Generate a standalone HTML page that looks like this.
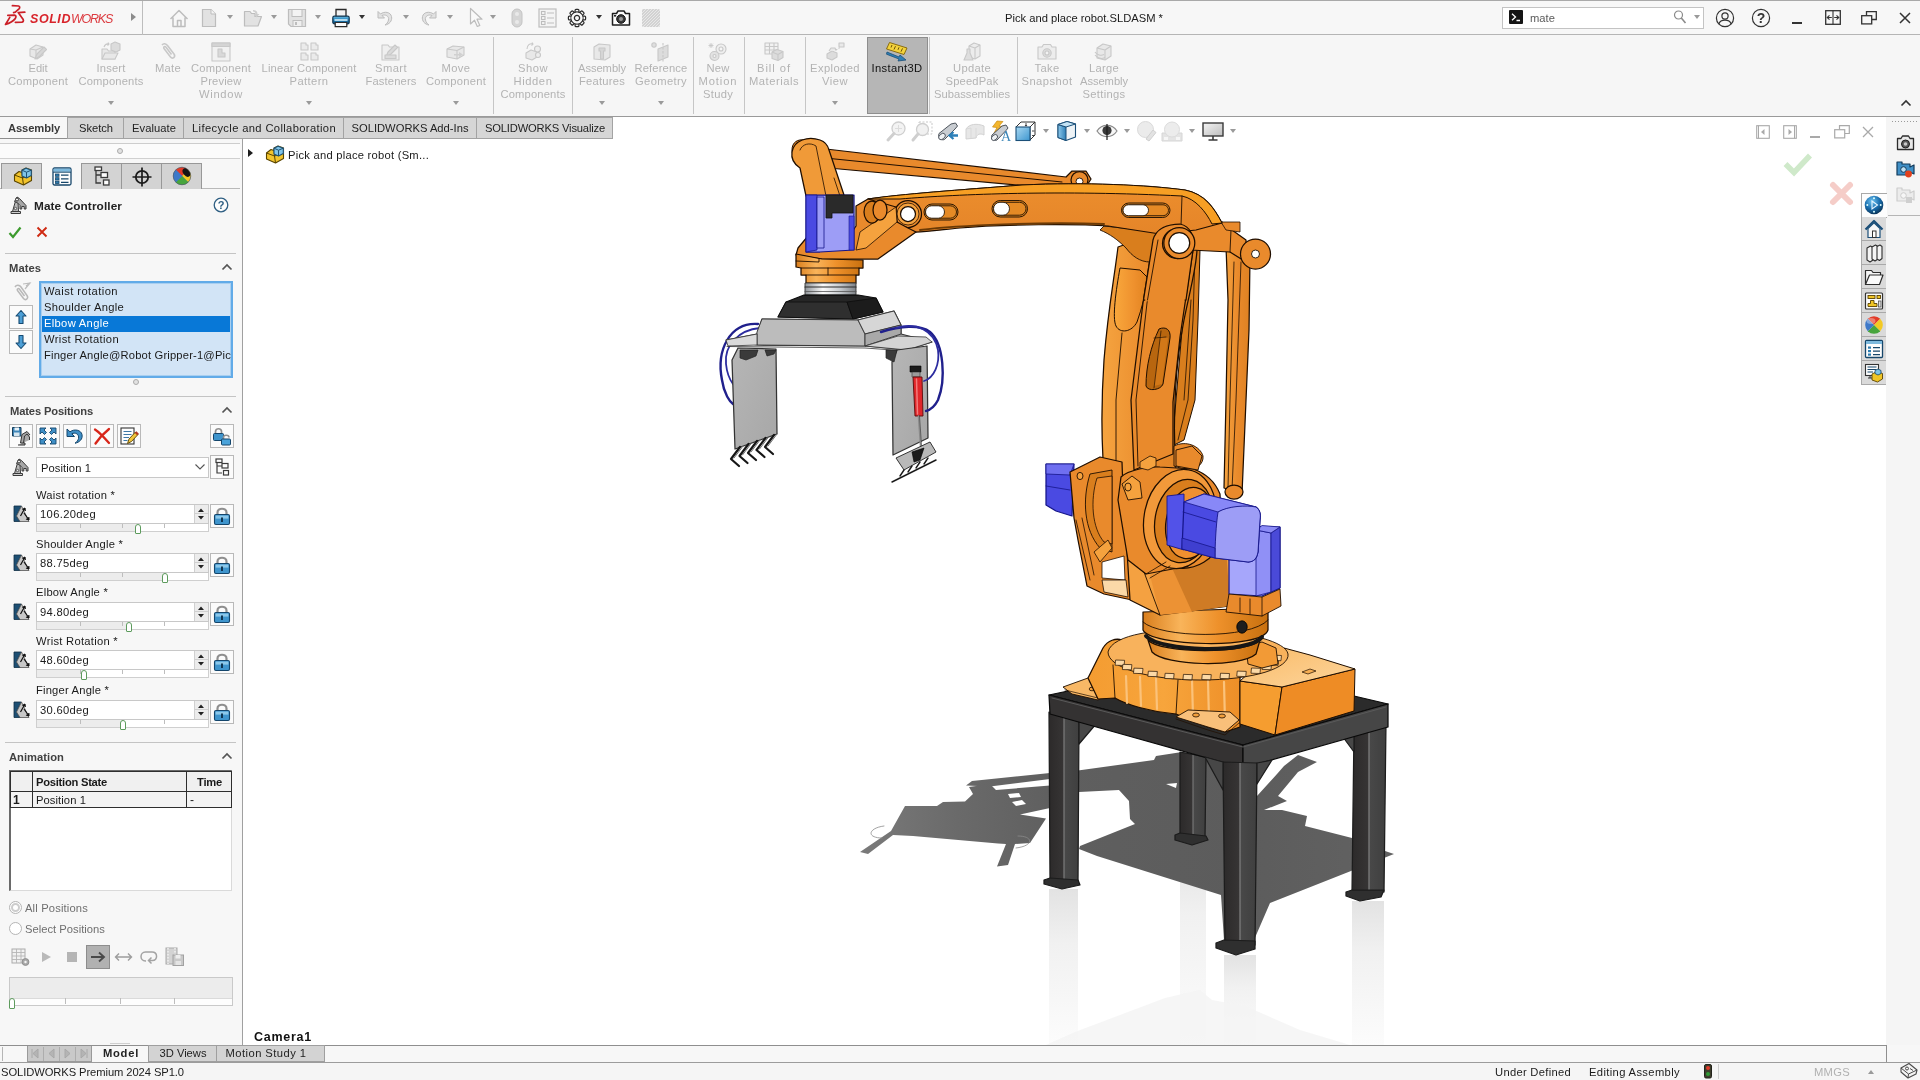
<!DOCTYPE html>
<html lang="en">
<head>
<meta charset="utf-8">
<title>Pick and place robot.SLDASM - SOLIDWORKS</title>
<style>
*{box-sizing:border-box;margin:0;padding:0}
html,body{width:1920px;height:1080px;overflow:hidden;background:#f7f7f7;font-family:"Liberation Sans",sans-serif;font-size:12px;color:#1e1e1e}
.abs{position:absolute}
.t{position:absolute;z-index:3;will-change:transform;white-space:nowrap;line-height:14px;height:14px}
.b{font-weight:bold}
.g{color:#b4b4b4}
svg{position:absolute;overflow:visible}
#titlebar{left:0;top:0;width:1920px;height:35px;background:#f7f7f7;border-top:1px solid #a9a9a9;border-bottom:1px solid #b5b5b5}
#ribbon{left:0;top:35px;width:1920px;height:82px;background:#f6f6f6;border-bottom:1px solid #9a9a9a}
.rl{position:absolute;text-align:center;color:#b2b2b2;font-size:12px;line-height:13px;white-space:nowrap;transform:translateX(-50%)}
.sep{position:absolute;top:37px;height:77px;width:1px;background:#c6c6c6}
.dd{position:absolute;width:0;height:0;border-left:3.5px solid transparent;border-right:3.5px solid transparent;border-top:4px solid #9a9a9a}
.dd.k{border-top-color:#333}
#viewport{left:243px;top:117px;width:1643px;height:928px;background:#fff}
#left{left:0;top:139px;width:243px;height:906px;background:#f7f7f7;border-right:1px solid #a0a0a0}
.ctab{position:absolute;z-index:2;top:117px;height:22px;background:#d6d6d6;border:1px solid #a3a3a3;border-left:none;text-align:center;line-height:20px;font-size:12px;color:#222}
.ptab{position:absolute;top:163px;height:26px;width:40px;background:#d3d3d3;border:1px solid #989898;border-bottom:none}
.hl{position:absolute;height:1px;background:#c4c4c4}
.sec{position:absolute;left:9px;font-weight:bold;color:#4a4a4a;font-size:12px;line-height:14px;white-space:nowrap}
.btn{position:absolute;width:24px;height:24px;border:1px solid #b9b9b9;background:#fbfbfb}
.inp{position:absolute;left:36px;width:173px;height:20px;background:#fff;border:1px solid #c8c8c8}
.sl{position:absolute;left:36px;width:173px;height:8px;background:#f0f0f0;border:1px solid #cfcfcf;border-top:none}
.tick{position:absolute;top:0;width:1px;height:4px;background:#bdbdbd}
.thumb{position:absolute;width:6px;height:10px;border:1px solid #5d9b5d;background:#fff;border-radius:3px 3px 1px 1px}
.spin{position:absolute;left:194px;width:14px;height:18px;background:#ececec;border-left:1px solid #d0d0d0}
.rtab{position:absolute;left:1861px;width:25px;height:24px;background:#dadada;border:1px solid #a9a9a9;border-right:none;border-top:none}
#status{left:0;top:1062px;width:1920px;height:18px;background:#f5f5f5;border-top:1px solid #9c9c9c}
#btabs{left:0;top:1045px;width:1887px;height:17px;background:#f7f7f7;border-top:1px solid #8f8f8f;border-right:1px solid #8f8f8f}
.bt{position:absolute;top:1045px;height:17px;background:#d3d3d3;border:1px solid #9f9f9f;border-left:none;text-align:center;line-height:15px;font-size:12px;color:#222}
</style>
</head>
<body>

<div id="titlebar" class="abs"></div>
<svg style="left:0px;top:0px" width="30" height="30" viewBox="0 0 30 30"><g fill="none" stroke="#cb1f27" stroke-width="1.700" stroke-linecap="round" stroke-linejoin="round">
<path d="M12.400 5.700 L18.600 6 C20.200 6.300 19.800 8 19 8.800 L15.300 12.200 L13.600 12.600"/>
<path d="M7.800 15.400 L14.600 15.100 C16.600 15.300 16 17.600 15.200 18.600 C12.800 21.500 9.400 23.300 5.500 24.500 L9.800 17.400" />
<path d="M24.800 12.200 L18.200 12.600 L23.200 19.600 C23.800 20.800 23.200 22 21.800 22.100 L15.300 22.300"/>
</g></svg>
<span class="t" style="font-size:12.5px;font-weight:bold;color:#d8232a;letter-spacing:0.559px;top:10.8px;line-height:16px;height:16px;left:30px;font-style:italic;">SOLID</span>
<span class="t" style="font-size:12.5px;color:#dc3a3f;letter-spacing:-1.247px;top:10.8px;line-height:16px;height:16px;left:71px;font-style:italic;">WORKS</span>
<div class="abs" style="left:131px;top:13px;width:0;height:0;border-top:4.5px solid transparent;border-bottom:4.5px solid transparent;border-left:5.5px solid #8c8c8c"></div>
<div class="abs" style="left:142px;top:1px;width:1px;height:34px;background:#bdbdbd"></div>
<svg style="left:169px;top:8px" width="20" height="20" viewBox="0 0 20 20"><path d="M1.5 11 L10 2.5 L18.5 11 M4 9.5 V18.5 H16 V9.5 M8.5 18.5 V12.5 H12 V18.5" fill="none" stroke="#bdbdbd" stroke-width="1.5" stroke-linejoin="round"/></svg>
<svg style="left:201px;top:8px" width="16" height="20" viewBox="0 0 16 20"><path d="M1.5 1.5 H10 L14.5 6 V18.5 H1.5 Z" fill="#e2e2e2" stroke="#bdbdbd" stroke-width="1.2"/><path d="M10 1.5 V6 H14.5" fill="#f4f4f4" stroke="#bdbdbd" stroke-width="1"/></svg>
<div class="dd" style="left:226.5px;top:15px"></div>
<svg style="left:243px;top:8px" width="20" height="20" viewBox="0 0 20 20"><path d="M1.5 18 V3.5 H7 L8.5 5.5 H12 V8.5 H18.5 L15 18 Z" fill="#e2e2e2" stroke="#bdbdbd" stroke-width="1.2" stroke-linejoin="round"/><path d="M10 2 C13 2 14.5 3.5 14.5 6 H16.5 L13.5 9.5 L10.5 6 H12.5 C12.5 4.5 11.5 3.5 10 3.5 Z" fill="#cfcfcf"/></svg>
<div class="dd" style="left:270.5px;top:15px"></div>
<svg style="left:287px;top:8px" width="20" height="20" viewBox="0 0 20 20"><path d="M1.5 1.5 H18.5 V18.5 H4 L1.5 16 Z" fill="#e2e2e2" stroke="#bdbdbd" stroke-width="1.2"/><rect x="5" y="1.5" width="10" height="7" fill="#f3f3f3" stroke="#bdbdbd" stroke-width="1"/><rect x="6" y="12.5" width="9" height="6" fill="#efefef" stroke="#bdbdbd" stroke-width="1"/><rect x="8" y="14" width="2" height="3" fill="#bdbdbd"/></svg>
<div class="dd" style="left:314.5px;top:15px"></div>
<svg style="left:331px;top:8px" width="20" height="20" viewBox="0 0 20 20"><defs><linearGradient id="prg" x1="0" y1="0" x2="0" y2="1"><stop offset="0" stop-color="#6fc0e8"/><stop offset=".5" stop-color="#1f7fb8"/><stop offset="1" stop-color="#0d4f80"/></linearGradient></defs>
<path d="M5 1.5 H15 V9 H5 Z" fill="#f2f2f2" stroke="#2a2a2a" stroke-width="1.3"/>
<rect x="1.8" y="8.2" width="16.4" height="7.6" rx="1.6" fill="url(#prg)" stroke="#12354f" stroke-width="1.2"/>
<rect x="3.5" y="11.2" width="13" height="1.6" fill="#d9f1fb"/>
<path d="M4.2 14.5 H15.8 V18.6 H4.2 Z" fill="#fafafa" stroke="#2a2a2a" stroke-width="1.2"/></svg>
<div class="dd k" style="left:358.5px;top:15px"></div>
<svg style="left:376px;top:9px" width="18" height="18" viewBox="0 0 18 18"><path d="M2 2.5 V9 H8.5 L6 6.5 C9 5 13.5 7 12.5 11 C12 13.5 10.5 15 9 16 C13 15.5 16.5 12 15.5 7.5 C14.5 3 8.5 2 4.5 5 Z" fill="#e2e2e2" stroke="#bdbdbd" stroke-width="1" stroke-linejoin="round"/></svg>
<div class="dd" style="left:402.5px;top:15px"></div>
<svg style="left:420px;top:9px" width="18" height="18" viewBox="0 0 18 18"><path d="M16 2.5 V9 H9.5 L12 6.5 C9 5 4.5 7 5.5 11 C6 13.5 7.5 15 9 16 C5 15.5 1.5 12 2.5 7.5 C3.5 3 9.500 2 13.5 5 Z" fill="#e2e2e2" stroke="#bdbdbd" stroke-width="1" stroke-linejoin="round"/></svg>
<div class="dd" style="left:446.5px;top:15px"></div>
<svg style="left:468px;top:7px" width="16" height="22" viewBox="0 0 16 22"><path d="M2.5 1.5 V17 L6.5 13.2 L9.3 19.5 L11.8 18.4 L9 12.2 H14 Z" fill="#f9f9f9" stroke="#bdbdbd" stroke-width="1.2" stroke-linejoin="round"/></svg>
<div class="dd" style="left:489.5px;top:15px"></div>
<svg style="left:511px;top:8px" width="12" height="20" viewBox="0 0 12 20"><rect x="1" y="1" width="10" height="18" rx="5" fill="#d5d5d5" stroke="#c4c4c4"/><circle cx="6" cy="6" r="2" fill="#e9e9e9"/><circle cx="6" cy="14" r="2" fill="#e9e9e9"/></svg>
<svg style="left:538px;top:8px" width="19" height="20" viewBox="0 0 19 20"><rect x="1" y="1" width="17" height="18" fill="#f4f4f4" stroke="#bdbdbd" stroke-width="1.2"/><g fill="none" stroke="#bdbdbd" stroke-width="1.1"><rect x="3.5" y="3.5" width="3.5" height="3"/><rect x="3.5" y="8.5" width="3.5" height="3"/><rect x="3.5" y="13.5" width="3.5" height="3"/><path d="M9 5 H16 M9 10 H16 M9 15 H16"/></g></svg>
<svg style="left:568px;top:9px" width="18" height="18" viewBox="0 0 18 18"><g transform="translate(9,9)"><g fill="#f7f7f7" stroke="#2b2b2b" stroke-width="1.2"><rect x="-1.9" y="-8.6" width="3.8" height="4" rx="0.9" transform="rotate(0)"/><rect x="-1.9" y="-8.6" width="3.8" height="4" rx="0.9" transform="rotate(45)"/><rect x="-1.9" y="-8.6" width="3.8" height="4" rx="0.9" transform="rotate(90)"/><rect x="-1.9" y="-8.6" width="3.8" height="4" rx="0.9" transform="rotate(135)"/><rect x="-1.9" y="-8.6" width="3.8" height="4" rx="0.9" transform="rotate(180)"/><rect x="-1.9" y="-8.6" width="3.8" height="4" rx="0.9" transform="rotate(225)"/><rect x="-1.9" y="-8.6" width="3.8" height="4" rx="0.9" transform="rotate(270)"/><rect x="-1.9" y="-8.6" width="3.8" height="4" rx="0.9" transform="rotate(315)"/></g><circle r="6" fill="#f7f7f7" stroke="#2b2b2b" stroke-width="1.3"/><circle r="6" fill="#f7f7f7" stroke="none" transform="scale(.93)"/><circle r="2.6" fill="none" stroke="#2b2b2b" stroke-width="1.3"/></g></svg>
<div class="dd k" style="left:595.5px;top:15px"></div>
<svg style="left:611px;top:9px" width="20" height="18" viewBox="0 0 20 18"><path d="M1.5 4.5 H5.5 L7 2 H13 L14.5 4.5 H18.5 V16 H1.5 Z" fill="#fdfdfd" stroke="#1f1f1f" stroke-width="1.5" stroke-linejoin="round"/><circle cx="10" cy="10" r="4.3" fill="#3a3a3a" stroke="#111" stroke-width="1"/><circle cx="10" cy="10" r="2" fill="#9a9a9a"/><rect x="3" y="6" width="2.2" height="1.6" fill="#222"/></svg>
<svg style="left:641px;top:8px" width="20" height="20" viewBox="0 0 20 20"><defs><clipPath id="hc"><rect x="1" y="1" width="18" height="18" rx="1.5"/></clipPath></defs><rect x="1" y="1" width="18" height="18" rx="1.5" fill="#d2d2d2"/><g clip-path="url(#hc)" stroke="#e8e8e8" stroke-width="1"><path d='M-20 20 L0 0'/><path d='M-17 20 L3 0'/><path d='M-14 20 L6 0'/><path d='M-11 20 L9 0'/><path d='M-8 20 L12 0'/><path d='M-5 20 L15 0'/><path d='M-2 20 L18 0'/><path d='M1 20 L21 0'/><path d='M4 20 L24 0'/><path d='M7 20 L27 0'/><path d='M10 20 L30 0'/><path d='M13 20 L33 0'/><path d='M16 20 L36 0'/><path d='M19 20 L39 0'/></g></svg>
<span class="t" style="font-size:11.2px;color:#1a1a1a;top:10.0px;line-height:16px;height:16px;left:1005px;">Pick and place robot.SLDASM *</span>
<div class="abs" style="left:1502px;top:7px;width:202px;height:22px;background:#fff;border:1px solid #c3c3c3"></div>
<svg style="left:1509px;top:10px" width="14" height="14" viewBox="0 0 14 14"><rect width="14" height="14" rx="1" fill="#151515"/><path d="M3 3.8 L6.5 7 L3 10.2 M7.5 10.5 H11" fill="none" stroke="#fff" stroke-width="1.3"/></svg>
<span class="t" style="font-size:11.2px;color:#5a5a5a;letter-spacing:0.031px;top:9.5px;line-height:16px;height:16px;left:1530px;">mate</span>
<svg style="left:1673px;top:9px" width="14" height="16" viewBox="0 0 14 16"><circle cx="5.5" cy="6" r="4" fill="none" stroke="#8a8a8a" stroke-width="1.2"/><path d="M8.3 9 L12.5 14" stroke="#8a8a8a" stroke-width="1.6"/></svg>
<div class="dd" style="left:1693.5px;top:15px"></div>
<svg style="left:1715px;top:8px" width="20" height="20" viewBox="0 0 20 20"><circle cx="10" cy="10" r="8.6" fill="none" stroke="#333" stroke-width="1.2"/><circle cx="10" cy="8" r="3.1" fill="none" stroke="#333" stroke-width="1.2"/><path d="M4 15.8 C5 12.5 8 12.2 10 12.2 C12 12.2 15 12.5 16 15.8" fill="none" stroke="#333" stroke-width="1.2"/></svg>
<svg style="left:1751px;top:8px" width="20" height="20" viewBox="0 0 20 20"><circle cx="10" cy="10" r="8.6" fill="none" stroke="#333" stroke-width="1.2"/></svg>
<span class="t" style="font-size:14px;font-weight:bold;color:#333;top:10.3px;line-height:16px;height:16px;left:1761.3px;transform:translateX(-50%);">?</span>
<div class="abs" style="left:1792px;top:22px;width:10px;height:2px;background:#333"></div>
<svg style="left:1825px;top:10px" width="16" height="15" viewBox="0 0 16 15"><rect x=".7" y=".7" width="14.6" height="13.6" fill="none" stroke="#333" stroke-width="1.3"/><path d="M8 .7 V14.3 M2.2 7.5 H6.8 M9.2 7.500 H13.800 M4.500 5.300 L2.2 7.5 L4.5 9.7 M11.5 5.3 L13.8 7.5 L11.5 9.7" fill="none" stroke="#333" stroke-width="1.1"/></svg>
<svg style="left:1861px;top:11px" width="16" height="14" viewBox="0 0 16 14"><path d="M5.500 4.500 V.7 H15.3 V8.5 H11" fill="none" stroke="#333" stroke-width="1.3"/><rect x=".7" y="4.700" width="10" height="8.200" fill="none" stroke="#333" stroke-width="1.3"/></svg>
<svg style="left:1899px;top:12px" width="12" height="12" viewBox="0 0 12 12"><path d="M1 1 L11 11 M11 1 L1 11" stroke="#333" stroke-width="1.5"/></svg>
<div id="ribbon" class="abs"></div>
<div class="abs" style="left:867px;top:37px;width:61px;height:77px;background:#b6b6b6;border:1px solid #8e8e8e"></div>
<span class="t" style="font-size:11.2px;color:#b3b3b3;letter-spacing:-0.070px;top:60.0px;line-height:16px;height:16px;left:38px;transform:translateX(-50%);">Edit</span>
<span class="t" style="font-size:11.2px;color:#b3b3b3;letter-spacing:0.240px;top:73.0px;line-height:16px;height:16px;left:38px;transform:translateX(-50%);">Component</span>
<span class="t" style="font-size:11.2px;color:#b3b3b3;letter-spacing:0.169px;top:60.0px;line-height:16px;height:16px;left:111px;transform:translateX(-50%);">Insert</span>
<span class="t" style="font-size:11.2px;color:#b3b3b3;letter-spacing:0.156px;top:73.0px;line-height:16px;height:16px;left:111px;transform:translateX(-50%);">Components</span>
<span class="t" style="font-size:11.2px;color:#b3b3b3;letter-spacing:0.281px;top:60.0px;line-height:16px;height:16px;left:168px;transform:translateX(-50%);">Mate</span>
<span class="t" style="font-size:11.2px;color:#b3b3b3;letter-spacing:0.240px;top:60.0px;line-height:16px;height:16px;left:221px;transform:translateX(-50%);">Component</span>
<span class="t" style="font-size:11.2px;color:#b3b3b3;letter-spacing:0.172px;top:73.0px;line-height:16px;height:16px;left:221px;transform:translateX(-50%);">Preview</span>
<span class="t" style="font-size:11.2px;color:#b3b3b3;letter-spacing:0.701px;top:86.0px;line-height:16px;height:16px;left:221px;transform:translateX(-50%);">Window</span>
<span class="t" style="font-size:11.2px;color:#b3b3b3;letter-spacing:0.185px;top:60.0px;line-height:16px;height:16px;left:309px;transform:translateX(-50%);">Linear Component</span>
<span class="t" style="font-size:11.2px;color:#b3b3b3;letter-spacing:0.417px;top:73.0px;line-height:16px;height:16px;left:309px;transform:translateX(-50%);">Pattern</span>
<span class="t" style="font-size:11.2px;color:#b3b3b3;letter-spacing:0.431px;top:60.0px;line-height:16px;height:16px;left:391px;transform:translateX(-50%);">Smart</span>
<span class="t" style="font-size:11.2px;color:#b3b3b3;letter-spacing:0.139px;top:73.0px;line-height:16px;height:16px;left:391px;transform:translateX(-50%);">Fasteners</span>
<span class="t" style="font-size:11.2px;color:#b3b3b3;letter-spacing:0.410px;top:60.0px;line-height:16px;height:16px;left:456px;transform:translateX(-50%);">Move</span>
<span class="t" style="font-size:11.2px;color:#b3b3b3;letter-spacing:0.240px;top:73.0px;line-height:16px;height:16px;left:456px;transform:translateX(-50%);">Component</span>
<span class="t" style="font-size:11.2px;color:#b3b3b3;letter-spacing:0.500px;top:60.0px;line-height:16px;height:16px;left:533px;transform:translateX(-50%);">Show</span>
<span class="t" style="font-size:11.2px;color:#b3b3b3;letter-spacing:0.591px;top:73.0px;line-height:16px;height:16px;left:533px;transform:translateX(-50%);">Hidden</span>
<span class="t" style="font-size:11.2px;color:#b3b3b3;letter-spacing:0.156px;top:86.0px;line-height:16px;height:16px;left:533px;transform:translateX(-50%);">Components</span>
<span class="t" style="font-size:11.2px;color:#b3b3b3;letter-spacing:-0.062px;top:60.0px;line-height:16px;height:16px;left:602px;transform:translateX(-50%);">Assembly</span>
<span class="t" style="font-size:11.2px;color:#b3b3b3;letter-spacing:0.230px;top:73.0px;line-height:16px;height:16px;left:602px;transform:translateX(-50%);">Features</span>
<span class="t" style="font-size:11.2px;color:#b3b3b3;letter-spacing:0.153px;top:60.0px;line-height:16px;height:16px;left:661px;transform:translateX(-50%);">Reference</span>
<span class="t" style="font-size:11.2px;color:#b3b3b3;letter-spacing:0.359px;top:73.0px;line-height:16px;height:16px;left:661px;transform:translateX(-50%);">Geometry</span>
<span class="t" style="font-size:11.2px;color:#b3b3b3;letter-spacing:0.203px;top:60.0px;line-height:16px;height:16px;left:718px;transform:translateX(-50%);">New</span>
<span class="t" style="font-size:11.2px;color:#b3b3b3;letter-spacing:0.901px;top:73.0px;line-height:16px;height:16px;left:718px;transform:translateX(-50%);">Motion</span>
<span class="t" style="font-size:11.2px;color:#b3b3b3;letter-spacing:0.278px;top:86.0px;line-height:16px;height:16px;left:718px;transform:translateX(-50%);">Study</span>
<span class="t" style="font-size:11.2px;color:#b3b3b3;letter-spacing:0.949px;top:60.0px;line-height:16px;height:16px;left:774px;transform:translateX(-50%);">Bill of</span>
<span class="t" style="font-size:11.2px;color:#b3b3b3;letter-spacing:0.512px;top:73.0px;line-height:16px;height:16px;left:774px;transform:translateX(-50%);">Materials</span>
<span class="t" style="font-size:11.2px;color:#b3b3b3;letter-spacing:0.418px;top:60.0px;line-height:16px;height:16px;left:835px;transform:translateX(-50%);">Exploded</span>
<span class="t" style="font-size:11.2px;color:#b3b3b3;letter-spacing:0.488px;top:73.0px;line-height:16px;height:16px;left:835px;transform:translateX(-50%);">View</span>
<span class="t" style="font-size:11.2px;color:#b3b3b3;letter-spacing:0.320px;top:60.0px;line-height:16px;height:16px;left:972px;transform:translateX(-50%);">Update</span>
<span class="t" style="font-size:11.2px;color:#b3b3b3;letter-spacing:0.170px;top:73.0px;line-height:16px;height:16px;left:972px;transform:translateX(-50%);">SpeedPak</span>
<span class="t" style="font-size:11.2px;color:#b3b3b3;letter-spacing:0.010px;top:86.0px;line-height:16px;height:16px;left:972px;transform:translateX(-50%);">Subassemblies</span>
<span class="t" style="font-size:11.2px;color:#b3b3b3;letter-spacing:0.340px;top:60.0px;line-height:16px;height:16px;left:1047px;transform:translateX(-50%);">Take</span>
<span class="t" style="font-size:11.2px;color:#b3b3b3;letter-spacing:0.465px;top:73.0px;line-height:16px;height:16px;left:1047px;transform:translateX(-50%);">Snapshot</span>
<span class="t" style="font-size:11.2px;color:#b3b3b3;letter-spacing:0.275px;top:60.0px;line-height:16px;height:16px;left:1104px;transform:translateX(-50%);">Large</span>
<span class="t" style="font-size:11.2px;color:#b3b3b3;letter-spacing:-0.062px;top:73.0px;line-height:16px;height:16px;left:1104px;transform:translateX(-50%);">Assembly</span>
<span class="t" style="font-size:11.2px;color:#b3b3b3;letter-spacing:0.320px;top:86.0px;line-height:16px;height:16px;left:1104px;transform:translateX(-50%);">Settings</span>
<span class="t" style="font-size:11.2px;color:#111;letter-spacing:0.345px;top:60.0px;line-height:16px;height:16px;left:896.5px;transform:translateX(-50%);">Instant3D</span>
<div class="sep" style="left:493px"></div>
<div class="sep" style="left:572px"></div>
<div class="sep" style="left:693px"></div>
<div class="sep" style="left:744px"></div>
<div class="sep" style="left:805px"></div>
<div class="sep" style="left:929px"></div>
<div class="sep" style="left:1017px"></div>
<div class="dd" style="left:107.5px;top:101px"></div>
<div class="dd" style="left:305.5px;top:101px"></div>
<div class="dd" style="left:452.5px;top:101px"></div>
<div class="dd" style="left:598.5px;top:101px"></div>
<div class="dd" style="left:657.5px;top:101px"></div>
<div class="dd" style="left:831.5px;top:101px"></div>
<svg style="left:1900px;top:99px" width="12" height="8" viewBox="0 0 12 8"><path d="M1.5 6.5 L6 2 L10.5 6.5" fill="none" stroke="#333" stroke-width="1.6"/></svg>
<svg style="left:27px;top:40.5px" width="22" height="22" viewBox="0 0 22 22"><g fill="#e8e8e8" stroke="#c8c8c8" stroke-width="1.1" stroke-linejoin="round"><path d="M3 8 L9 4 L16 6 V14 L10 18 L3 15 Z"/><path d="M9 9 L16 6 M9 9 V18 M9 9 L3 8" fill="none"/><path d="M8 18 L10 13 L17 6 L19.500 8.500 L12.500 15.500 Z" fill="#d6d6d6"/></g></svg>
<svg style="left:100px;top:40.5px" width="22" height="22" viewBox="0 0 22 22"><g fill="#e8e8e8" stroke="#c8c8c8" stroke-width="1.1" stroke-linejoin="round"><path d="M2 18 V8 H7 L8.500 10 H15 V18 Z"/><path d="M2 18 L5 12 H18 L15 18 Z"/><path d="M11 3 L15 1 L20 3 V9 L16 11 L11 9 Z" fill="#dcdcdc"/><path d="M4 6 C5 3 7 2.500 9 3 L8 1.500 M9 3 L7.500 4.500" fill="none"/></g></svg>
<svg style="left:157px;top:40.5px" width="22" height="22" viewBox="0 0 22 22"><g fill="#e8e8e8" stroke="#c8c8c8" stroke-width="1.1" stroke-linejoin="round"><path d="M5 4 C6.500 2 9 2.500 10.500 4.500 L17 13 C19 16 15.500 18.500 13.500 16 L7 7.500 C6 6 8 4.800 9 6.200 L14.500 13.500" fill="none" stroke-width="1.6"/></g></svg>
<svg style="left:210px;top:40.5px" width="22" height="22" viewBox="0 0 22 22"><g fill="#e8e8e8" stroke="#c8c8c8" stroke-width="1.1" stroke-linejoin="round"><rect x="2" y="2" width="18" height="18" fill="#f1f1f1"/><rect x="2" y="2" width="18" height="3.500" fill="#d4d4d4"/><path d="M8 8 H12 V12 H15 V16 H8 Z" fill="#d9d9d9"/></g></svg>
<svg style="left:298px;top:40.5px" width="22" height="22" viewBox="0 0 22 22"><g fill="#e8e8e8" stroke="#c8c8c8" stroke-width="1.1" stroke-linejoin="round"><g fill="#ebebeb"><path d="M3 2 H8 V4 H10 V9 H3 Z"/><path d="M13 2 H18 V4 H20 V9 H13 Z"/><path d="M3 12 H8 V14 H10 V19 H3 Z"/><path d="M13 12 H18 V14 H20 V19 H13 Z"/></g></g></svg>
<svg style="left:380px;top:40.5px" width="22" height="22" viewBox="0 0 22 22"><g fill="#e8e8e8" stroke="#c8c8c8" stroke-width="1.1" stroke-linejoin="round"><path d="M2 4 H8 L9.500 6 H19 V19 H2 Z" fill="#efefef"/><path d="M6 16 L8 11 L15 4 L17.500 6.500 L10.500 13.500 Z" fill="#dadada"/><rect x="5" y="14" width="11" height="3.500" fill="#dcdcdc"/></g></svg>
<svg style="left:445px;top:40.5px" width="22" height="22" viewBox="0 0 22 22"><g fill="#e8e8e8" stroke="#c8c8c8" stroke-width="1.1" stroke-linejoin="round"><path d="M2 8 L8 5 L19 6 V14 L12 18 L2 16 Z"/><path d="M2 8 L12 9.500 L19 6 M12 9.500 V18" fill="none"/><path d="M9 13 H14 V11 L18 13.500 L14 16 V14.500 H9 Z" fill="#d0d0d0" stroke="none"/></g></svg>
<svg style="left:522px;top:40.5px" width="22" height="22" viewBox="0 0 22 22"><g fill="#e8e8e8" stroke="#c8c8c8" stroke-width="1.1" stroke-linejoin="round"><path d="M4 12 L9 9 L15 11 V16 L10 19 L4 17 Z"/><circle cx="15.500" cy="8" r="3" fill="#ededed"/><circle cx="16" cy="14" r="2.500" fill="#ededed"/><path d="M5 8 C5 4 8 2 11 3 L10 1.500 M11 3 L9.500 4.500" fill="none"/></g></svg>
<svg style="left:591px;top:40.5px" width="22" height="22" viewBox="0 0 22 22"><g fill="#e8e8e8" stroke="#c8c8c8" stroke-width="1.1" stroke-linejoin="round"><path d="M3 6 L8 3 L19 4 V16 L14 19 L3 18 Z"/><path d="M8 7 H14 V10 H12.500 V18 H9.500 V10 H8 Z" fill="#d6d6d6"/></g></svg>
<svg style="left:650px;top:40.5px" width="22" height="22" viewBox="0 0 22 22"><g fill="#e8e8e8" stroke="#c8c8c8" stroke-width="1.1" stroke-linejoin="round"><circle cx="4" cy="4" r="2.200" fill="#dedede"/><path d="M8 8 L18 4 V16 L8 20 Z" fill="#dcdcdc"/><path d="M13 2 V21" fill="none" stroke-dasharray="2.500 1.500"/></g></svg>
<svg style="left:707px;top:40.5px" width="22" height="22" viewBox="0 0 22 22"><g fill="#e8e8e8" stroke="#c8c8c8" stroke-width="1.1" stroke-linejoin="round"><circle cx="14" cy="8" r="5" fill="#efefef"/><circle cx="14" cy="8" r="2" fill="#f6f6f6"/><circle cx="7.500" cy="15" r="4.500" fill="#e2e2e2"/><circle cx="7.500" cy="15" r="1.500" fill="#f6f6f6"/><path d="M4 2 V7 M1.500 4.500 H6.500 M2.200 2.700 L5.800 6.300 M5.800 2.700 L2.200 6.300" fill="none" stroke-width=".9"/></g></svg>
<svg style="left:763px;top:40.5px" width="22" height="22" viewBox="0 0 22 22"><g fill="#e8e8e8" stroke="#c8c8c8" stroke-width="1.1" stroke-linejoin="round"><rect x="2" y="2" width="13" height="11" fill="#f2f2f2"/><path d="M2 5.500 H15 M2 9 H15 M6.500 2 V13 M11 2 V13" fill="none"/><path d="M9 11 L14 8.500 L20 10.500 V16.500 L15 19.500 L9 17.500 Z" fill="#dcdcdc"/><path d="M9 11 L15 13.500 L20 10.500 M15 13.500 V19.500" fill="none"/></g></svg>
<svg style="left:824px;top:40.5px" width="22" height="22" viewBox="0 0 22 22"><g fill="#e8e8e8" stroke="#c8c8c8" stroke-width="1.1" stroke-linejoin="round"><path d="M3 13 L8 10 L13 12 V16 L8 19 L3 17 Z" fill="#dcdcdc"/><path d="M5 10 L7 7 H11 L12 9.500" fill="#e9e9e9"/><rect x="15" y="2" width="5" height="4" fill="#e9e9e9"/><path d="M12 9 L16 6.500" fill="none" stroke-dasharray="1.500 1.500"/></g></svg>
<svg style="left:961px;top:40.5px" width="22" height="22" viewBox="0 0 22 22"><g fill="#e8e8e8" stroke="#c8c8c8" stroke-width="1.1" stroke-linejoin="round"><path d="M8 5 L13 2 L19 4 V15 L14 18 L8 16 Z" fill="#ececec"/><path d="M8 5 L14 7 L19 4 M14 7 V18" fill="none"/><path d="M3 19 L6 12 V8 H9 V12 L12 19 Z" fill="#dedede"/></g></svg>
<svg style="left:1036px;top:40.5px" width="22" height="22" viewBox="0 0 22 22"><g fill="#e8e8e8" stroke="#c8c8c8" stroke-width="1.1" stroke-linejoin="round"><path d="M2 6 H6 L7.500 3.500 H14.500 L16 6 H20 V18 H2 Z" fill="#ededed"/><circle cx="11" cy="12" r="4.200" fill="#dcdcdc"/><circle cx="11" cy="12" r="2" fill="#f2f2f2"/></g></svg>
<svg style="left:1093px;top:40.5px" width="22" height="22" viewBox="0 0 22 22"><g fill="#e8e8e8" stroke="#c8c8c8" stroke-width="1.1" stroke-linejoin="round"><path d="M4 7 L10 3 L18 5 V15 L12 19 L4 17 Z" fill="#e8e8e8"/><path d="M4 7 L12 9 L18 5 M12 9 V19" fill="none"/><path d="M2 11 C4 14 8 15 11 13.500 M2 14 C5 17.500 9 18 12 16.500" fill="none"/></g></svg>
<svg style="left:884px;top:40px" width="26" height="22" viewBox="0 0 26 22"><path d="M2.500 9 L5.500 2.500 L23 8 L20 14.500 Z" fill="#f3d23c" stroke="#8a6d10" stroke-width="1"/>
<path d="M8 5 L7 7.500 M11.500 6.200 L10 9.500 M15 7.300 L14 9.800 M18.500 8.400 L17 11.700" stroke="#6b5208" stroke-width="1"/>
<path d="M3 12 L15 17 L16 15 L22 20 L14 21 L15 19 L2.500 14.200 Z" fill="#2f7fb5" stroke="#1b4f78" stroke-width=".8"/></svg>
<div class="abs" style="left:0;top:117px;width:243px;height:22px;background:#f7f7f7"></div>
<div class="abs" style="left:0;top:138px;width:243px;height:1px;background:#8e8e8e"></div>
<span class="t" style="font-size:11.2px;font-weight:bold;color:#3a3a3a;letter-spacing:-0.107px;top:120.0px;line-height:16px;height:16px;left:8px;">Assembly</span>
<div class="abs" style="left:67px;top:117px;width:1px;height:22px;background:#a3a3a3"></div>
<div class="ctab" style="left:68px;width:56px"></div>
<span class="t" style="font-size:11.2px;color:#222;letter-spacing:-0.034px;top:120.0px;line-height:16px;height:16px;left:95.5px;transform:translateX(-50%);">Sketch</span>
<div class="ctab" style="left:124px;width:60px"></div>
<span class="t" style="font-size:11.2px;color:#222;letter-spacing:0.057px;top:120.0px;line-height:16px;height:16px;left:153.5px;transform:translateX(-50%);">Evaluate</span>
<div class="ctab" style="left:184px;width:160px"></div>
<span class="t" style="font-size:11.2px;color:#222;letter-spacing:0.358px;top:120.0px;line-height:16px;height:16px;left:263.5px;transform:translateX(-50%);">Lifecycle and Collaboration</span>
<div class="ctab" style="left:344px;width:133px"></div>
<span class="t" style="font-size:11.2px;color:#222;letter-spacing:0.006px;top:120.0px;line-height:16px;height:16px;left:410.0px;transform:translateX(-50%);">SOLIDWORKS Add-Ins</span>
<div class="ctab" style="left:477px;width:136px"></div>
<span class="t" style="font-size:11.2px;color:#222;letter-spacing:-0.177px;top:120.0px;line-height:16px;height:16px;left:544.5px;transform:translateX(-50%);">SOLIDWORKS Visualize</span>
<div id="btabs" class="abs"></div>
<div id="status" class="abs"></div>
<div class="abs" style="left:2px;top:1047px;width:1px;height:14px;background:#b5b5b5"></div>
<div class="abs" style="left:27px;top:1046px;width:65px;height:16px;background:#c9c9c9;border:1px solid #9a9a9a;border-top:none"></div>
<svg style="left:31px;top:1047px" width="9" height="13" viewBox="0 0 9 13"><path d="M7 2 L2 6.500 L7 11 Z M1 2 V11" fill="#b4b4b4" stroke="#a8a8a8" stroke-width="1"/></svg>
<svg style="left:47px;top:1047px" width="9" height="13" viewBox="0 0 9 13"><path d="M7 2 L2 6.500 L7 11 Z" fill="#b4b4b4" stroke="#a8a8a8" stroke-width="1"/></svg>
<svg style="left:63px;top:1047px" width="9" height="13" viewBox="0 0 9 13"><path d="M2 2 L7 6.500 L2 11 Z" fill="#b4b4b4" stroke="#a8a8a8" stroke-width="1"/></svg>
<svg style="left:79px;top:1047px" width="9" height="13" viewBox="0 0 9 13"><path d="M2 2 L7 6.500 L2 11 Z M8 2 V11" fill="#b4b4b4" stroke="#a8a8a8" stroke-width="1"/></svg>
<div class="abs" style="left:43px;top:1047px;width:1px;height:14px;background:#adadad"></div>
<div class="abs" style="left:59px;top:1047px;width:1px;height:14px;background:#adadad"></div>
<div class="abs" style="left:75px;top:1047px;width:1px;height:14px;background:#adadad"></div>
<span class="t" style="font-size:11.2px;font-weight:bold;color:#222;letter-spacing:0.734px;top:1045.0px;line-height:16px;height:16px;left:121px;transform:translateX(-50%);">Model</span>
<div class="abs" style="left:148px;top:1045px;width:1px;height:17px;background:#9f9f9f"></div>
<div class="bt" style="left:149px;width:68px"></div>
<span class="t" style="font-size:11.2px;color:#222;letter-spacing:-0.008px;top:1045.0px;line-height:16px;height:16px;left:183px;transform:translateX(-50%);">3D Views</span>
<div class="bt" style="left:217px;width:108px"></div>
<span class="t" style="font-size:11.2px;color:#222;letter-spacing:0.454px;top:1045.0px;line-height:16px;height:16px;left:266px;transform:translateX(-50%);">Motion Study 1</span>
<span class="t" style="font-size:11.2px;color:#1c1c1c;letter-spacing:-0.079px;top:1063.5px;line-height:16px;height:16px;left:1px;">SOLIDWORKS Premium 2024 SP1.0</span>
<span class="t" style="font-size:11.2px;color:#1c1c1c;letter-spacing:0.297px;top:1063.5px;line-height:16px;height:16px;left:1495px;">Under Defined</span>
<span class="t" style="font-size:11.2px;color:#1c1c1c;letter-spacing:0.362px;top:1063.5px;line-height:16px;height:16px;left:1589px;">Editing Assembly</span>
<svg style="left:1704px;top:1064px" width="8" height="15" viewBox="0 0 8 15"><rect x=".5" y=".5" width="7" height="13.500" rx="1.500" fill="#3d3d2c" stroke="#22221a"/><circle cx="4" cy="4" r="2" fill="#e03a2a"/><circle cx="4" cy="10" r="2" fill="#2f9a36"/></svg>
<div class="abs" style="left:1718px;top:1064px;width:1px;height:15px;background:#cfcfcf"></div>
<span class="t" style="font-size:11.2px;color:#b0b0b0;letter-spacing:0.297px;top:1063.5px;line-height:16px;height:16px;left:1814px;">MMGS</span>
<div class="abs" style="left:1868px;top:1070px;width:0;height:0;border-left:3px solid transparent;border-right:3px solid transparent;border-bottom:4px solid #9a9a9a"></div>
<svg style="left:1900px;top:1062px" width="18" height="17" viewBox="0 0 18 17"><path d="M1 6 L9 1.500 L17 8 L16 12 L8 16 L1 10 Z" fill="#f3f3f3" stroke="#4a4a4a" stroke-width="1.1" stroke-linejoin="round"/><path d="M1 6 L8.500 12 L17 8 M8.500 12 L8 16" fill="none" stroke="#4a4a4a" stroke-width="1"/><circle cx="7" cy="6.500" r="1.500" fill="none" stroke="#4a4a4a"/><path d="M10 6.500 L13 8.500" stroke="#4a4a4a"/></svg>
<div id="left" class="abs"></div>
<div class="hl" style="left:0;top:143px;width:240px;background:#cdcdcd"></div>
<div class="abs" style="left:0;top:144px;width:240px;height:14px;background:#fbfbfb"></div>
<div class="hl" style="left:0;top:158px;width:240px;background:#d0d0d0"></div>
<div class="abs" style="left:117px;top:148px;width:6px;height:6px;border-radius:50%;background:#e2e2e2;border:1px solid #ababab"></div>
<div class="hl" style="left:0;top:188px;width:240px;background:#b9b9b9"></div>
<div class="ptab" style="left:1px;width:41px"></div>
<div class="abs" style="left:42px;top:163px;width:40px;height:27px;background:#f7f7f7"></div>
<div class="ptab" style="left:81px;width:41px"></div>
<div class="ptab" style="left:121px;width:41px"></div>
<div class="ptab" style="left:161px;width:41px"></div>
<svg style="left:13px;top:166px" width="20" height="20" viewBox="0 0 20 20"><path d="M1.500 9 L6 5.500 L9 6.500 V4 L13 2 L18.500 4 V14.500 L10.500 19 L1.500 15 Z" fill="#f2c42c" stroke="#5a4500" stroke-width="1.100" stroke-linejoin="round"/><path d="M9 6.500 L9.500 12 L1.500 9 M9.500 12 L10.500 19 M9.500 12 L18.500 9" fill="none" stroke="#5a4500" stroke-width="1"/><path d="M9 4.200 L13 2.200 L18.300 4.200 V9.500 L13.500 12 L9 10 Z" fill="#7fc4e8" stroke="#1f5274" stroke-width="1.100" stroke-linejoin="round"/><path d="M9 4.200 L13.500 6.200 L18.300 4.200 M13.500 6.200 V12" fill="none" stroke="#1f5274" stroke-width="1"/></svg>
<svg style="left:52px;top:167px" width="20" height="19" viewBox="0 0 20 19"><rect x="1" y="1" width="18" height="17" rx="1.500" fill="#fdfdfd" stroke="#17476b" stroke-width="1.300"/><rect x="1.600" y="1.600" width="16.800" height="3.200" fill="#7db9dd"/><path d="M1 5.200 H19" stroke="#17476b" stroke-width="1"/><g fill="#2c7cb0" stroke="#17476b" stroke-width=".8"><rect x="3.500" y="7" width="3.500" height="2.300"/><rect x="3.500" y="10.700" width="3.500" height="2.300"/><rect x="3.500" y="14.200" width="3.500" height="2.300"/></g><path d="M9 8.200 H16.500 M9 11.900 H16.500 M9 15.400 H16.500" stroke="#17476b" stroke-width="1.300"/></svg>
<svg style="left:93px;top:166px" width="18" height="21" viewBox="0 0 18 21"><g fill="#fdfdfd" stroke="#3b3b3b" stroke-width="1.300"><path d="M3 1 V17 H8 M3 9 H8" fill="none"/><rect x="2" y="1" width="6.500" height="3.500"/><rect x="8" y="6.500" width="6.500" height="5"/><rect x="10.500" y="14" width="5.500" height="5"/></g></svg>
<svg style="left:132px;top:167px" width="20" height="20" viewBox="0 0 20 20"><circle cx="10" cy="10" r="6.200" fill="none" stroke="#1c1c1c" stroke-width="1.800"/><path d="M10 .5 V19.500 M.5 10 H19.500" stroke="#1c1c1c" stroke-width="1.700"/></svg>
<svg style="left:172px;top:166px" width="20" height="20" viewBox="0 0 20 20"><defs><clipPath id="bb"><circle cx="10" cy="10" r="8.800"/></clipPath></defs><g clip-path="url(#bb)"><rect width="20" height="20" fill="#3e79c9"/><path d="M10 10 L0 0 H20 Z" fill="#e23b28"/><path d="M10 10 L20 0 V20 Z" fill="#f3c923"/><path d="M10 10 L20 20 H0 Z" fill="#47a53d"/><path d="M10 10 L0 20 V0 Z" fill="#3e79c9"/><ellipse cx="14.500" cy="6.500" rx="3.200" ry="4.800" transform="rotate(-38 14.500 6.500)" fill="#151515"/></g><circle cx="10" cy="10" r="8.800" fill="none" stroke="#555" stroke-width=".6"/></svg>
<svg style="left:9px;top:195px" width="20" height="20" viewBox="0 0 20 20"><g stroke="#3a3a3a" stroke-width="1" stroke-linejoin="round"><path d="M2 18.500 H11.500 V16.500 H2 Z" fill="#cfcfcf"/><path d="M3.500 16.500 L6.500 6 L9 7 L9.500 16.500 Z" fill="#b9b9b9"/><path d="M5.500 6.500 L8 2 L10.500 3.500 L17 10.500 V14 H15.200 V11.500 H12.800 V14 H11 V10.500 L8.500 7.800 Z" fill="#a6a6a6"/><circle cx="8" cy="4.500" r="1.500" fill="#ededed"/><circle cx="6.500" cy="13.500" r="1.200" fill="#ededed" stroke-width=".8"/></g></svg>
<span class="t" style="font-size:11.8px;font-weight:bold;color:#222;letter-spacing:0.098px;top:198.0px;line-height:16px;height:16px;left:34px;">Mate Controller</span>
<svg style="left:213px;top:197px" width="16" height="16" viewBox="0 0 16 16"><circle cx="8" cy="8" r="6.800" fill="#fdfdfd" stroke="#2f5f83" stroke-width="1.300"/></svg>
<span class="t" style="font-size:11px;font-weight:bold;color:#2f5f83;top:197.3px;line-height:16px;height:16px;left:221.2px;transform:translateX(-50%);">?</span>
<svg style="left:8px;top:226px" width="14" height="13" viewBox="0 0 14 13"><path d="M1.500 7 L5 11 L12.500 1.500" fill="none" stroke="#3d9b2e" stroke-width="2.200"/></svg>
<svg style="left:36px;top:226px" width="12" height="12" viewBox="0 0 12 12"><path d="M1.500 1.500 L10.500 10.500 M10.500 1.500 L1.500 10.500" stroke="#cf2a12" stroke-width="1.900"/></svg>
<div class="hl" style="left:5px;top:253px;width:231px"></div>
<span class="t" style="font-size:11.2px;font-weight:bold;color:#414141;letter-spacing:0.056px;top:260.0px;line-height:16px;height:16px;left:9px;">Mates</span>
<svg style="left:221px;top:263px" width="12" height="8" viewBox="0 0 12 8"><path d="M1.500 6.500 L6 2 L10.500 6.500" fill="none" stroke="#555" stroke-width="1.700"/></svg>
<div class="abs" style="left:39px;top:281px;width:194px;height:97px;background:#d2e4f6;border:2px solid #62abe8;box-shadow:inset 0 0 0 1px #a9cff0"></div>
<div class="abs" style="left:42px;top:316px;width:188px;height:16px;background:#0878d7"></div>
<span class="t" style="font-size:11.2px;color:#1a1a1a;letter-spacing:0.430px;top:283.0px;line-height:16px;height:16px;left:44px;">Waist rotation</span>
<span class="t" style="font-size:11.2px;color:#1a1a1a;letter-spacing:0.294px;top:299.0px;line-height:16px;height:16px;left:44px;">Shoulder Angle</span>
<span class="t" style="font-size:11.2px;color:#fff;letter-spacing:0.311px;top:315.0px;line-height:16px;height:16px;left:44px;">Elbow Angle</span>
<span class="t" style="font-size:11.2px;color:#1a1a1a;letter-spacing:0.353px;top:331.0px;line-height:16px;height:16px;left:44px;">Wrist Rotation</span>
<span class="t" style="font-size:11.2px;color:#1a1a1a;letter-spacing:0.178px;top:347.0px;line-height:16px;height:16px;left:44px;">Finger Angle@Robot Gripper-1@Pic</span>
<svg style="left:11px;top:282px" width="22" height="22" viewBox="0 0 22 22"><path d="M4 5 C5.500 2.500 8.500 3 10 5 L16 13.500 C18 16.500 14.500 19 12.500 16.500 L6.500 8.500 C5.500 7 7.500 5.800 8.500 7.200 L13.500 14" fill="none" stroke="#b9b9b9" stroke-width="1.500"/><path d="M12 2 L19 1 L14 7 M19 1 L15 4" fill="none" stroke="#bdbdbd" stroke-width="1.200"/></svg>
<div class="btn" style="left:9px;top:305px"></div>
<div class="btn" style="left:9px;top:330px"></div>
<svg style="left:14px;top:309px" width="14" height="16" viewBox="0 0 14 16"><path d="M7 1.500 L12 7 H9 V14.500 H5 V7 H2 Z" fill="#4d9fd6" stroke="#154a72" stroke-width="1.100" stroke-linejoin="round"/></svg>
<svg style="left:14px;top:334px" width="14" height="16" viewBox="0 0 14 16"><path d="M7 14.500 L12 9 H9 V1.500 H5 V9 H2 Z" fill="#4d9fd6" stroke="#154a72" stroke-width="1.100" stroke-linejoin="round"/></svg>
<div class="abs" style="left:133px;top:379px;width:6px;height:6px;border-radius:50%;background:#e2e2e2;border:1px solid #ababab"></div>
<div class="hl" style="left:5px;top:396px;width:231px"></div>
<span class="t" style="font-size:11.2px;font-weight:bold;color:#414141;letter-spacing:-0.145px;top:403.0px;line-height:16px;height:16px;left:9.5px;">Mates Positions</span>
<svg style="left:221px;top:406px" width="12" height="8" viewBox="0 0 12 8"><path d="M1.500 6.500 L6 2 L10.500 6.500" fill="none" stroke="#555" stroke-width="1.700"/></svg>
<div class="btn" style="left:9px;top:424px"></div>
<div class="btn" style="left:36px;top:424px"></div>
<div class="btn" style="left:63px;top:424px"></div>
<div class="btn" style="left:90px;top:424px"></div>
<div class="btn" style="left:117px;top:424px"></div>
<div class="btn" style="left:210px;top:424px"></div>
<svg style="left:11px;top:426px" width="20" height="20" viewBox="0 0 20 20"><path d="M1.500 1.500 H10 V10 H1.500 Z" fill="#3f86b8" stroke="#173f5c"/><rect x="3.500" y="1.500" width="4.500" height="3" fill="#e8f2f8"/><rect x="3" y="6.500" width="5.500" height="3.500" fill="#d6e6f0"/><path d="M7 19 H14 V17 H12.500 L13.500 10 L16 8 L18.500 11 V14 M12.500 17 L9.500 17 L11 8.500 L16 5.500 L19 9" fill="#a9a9a9" stroke="#333" stroke-width="1" stroke-linejoin="round"/></svg>
<svg style="left:38px;top:426px" width="20" height="20" viewBox="0 0 20 20"><g fill="#3f8fc6" stroke="#14456b" stroke-width=".9" stroke-linejoin="round"><path d="M2 8 V2 H8 L6 4 L8.500 6.500 L6.500 8.500 L4 6 Z"/><path d="M12 2 H18 V8 L16 6 L13.500 8.500 L11.500 6.500 L14 4 Z"/><path d="M18 12 V18 H12 L14 16 L11.500 13.500 L13.500 11.500 L16 14 Z"/><path d="M8 18 H2 V12 L4 14 L6.500 11.500 L8.500 13.500 L6 16 Z"/></g></svg>
<svg style="left:65px;top:427px" width="20" height="18" viewBox="0 0 20 18"><path d="M2 2 V9.500 H9.500 L6.800 6.800 C10 5 14.500 7 13.500 11.500 C13 13.500 11.800 15 10 16.200 C14.500 15.500 18 12 17 7.500 C16 3 9.500 1.500 5 4.800 Z" fill="#3f8fc6" stroke="#14456b" stroke-width="1" stroke-linejoin="round"/></svg>
<svg style="left:93px;top:427px" width="18" height="18" viewBox="0 0 18 18"><path d="M2 2.500 C6 5 9 8 16 16 M16 2 C11 6 7 10 2.500 16.500" fill="none" stroke="#d8261a" stroke-width="2.300" stroke-linecap="round"/></svg>
<svg style="left:119px;top:426px" width="20" height="20" viewBox="0 0 20 20"><rect x="2" y="2" width="13" height="16" fill="#fdfdfd" stroke="#333" stroke-width="1.100"/><path d="M4.500 5.500 H12.500 M4.500 8.500 H12.500 M4.500 11.500 H10 M4.500 14.500 H8.500" stroke="#3f78a6" stroke-width="1.100"/><path d="M8.500 17.500 L10 13 L16.500 6 L19 8.500 L12.500 15.500 Z" fill="#f2c53a" stroke="#5a4300" stroke-width=".9" stroke-linejoin="round"/><path d="M16.500 6 L19 8.500" stroke="#b3371f" stroke-width="2.400"/></svg>
<svg style="left:212px;top:426px" width="20" height="20" viewBox="0 0 20 20"><path d="M3.500 8 V5.500 C3.500 1.800 9.500 1.800 9.500 5.500 V8" fill="none" stroke="#8f8f8f" stroke-width="1.700"/><rect x="1.500" y="7.500" width="10" height="7" rx="1" fill="#3f95cd" stroke="#14456b"/><path d="M11.500 13 V11.500 C11.500 8.500 17 8.500 17 11.500" fill="none" stroke="#8f8f8f" stroke-width="1.600"/><rect x="9.500" y="13" width="9" height="6" rx="1" fill="#4aa3da" stroke="#14456b"/></svg>
<svg style="left:11px;top:457px" width="20" height="20" viewBox="0 0 20 20"><g stroke="#3a3a3a" stroke-width="1" stroke-linejoin="round"><path d="M2 18.500 H11.500 V16.500 H2 Z" fill="#cfcfcf"/><path d="M3.500 16.500 L6.500 6 L9 7 L9.500 16.500 Z" fill="#b9b9b9"/><path d="M5.500 6.500 L8 2 L10.500 3.500 L17 10.500 V14 H15.200 V11.500 H12.800 V14 H11 V10.500 L8.500 7.800 Z" fill="#a6a6a6"/><circle cx="8" cy="4.500" r="1.500" fill="#ededed"/><circle cx="6.500" cy="13.500" r="1.200" fill="#ededed" stroke-width=".8"/></g></svg>
<div class="inp" style="top:457px;height:21px"></div>
<span class="t" style="font-size:11.2px;color:#1a1a1a;letter-spacing:0.086px;top:459.5px;line-height:16px;height:16px;left:41px;">Position 1</span>
<svg style="left:194px;top:463px" width="12" height="8" viewBox="0 0 12 8"><path d="M1.500 1.500 L6 6 L10.500 1.500" fill="none" stroke="#555" stroke-width="1.100"/></svg>
<div class="btn" style="left:210px;top:455px"></div>
<svg style="left:214px;top:458px" width="16" height="19" viewBox="0 0 16 19"><g fill="#fdfdfd" stroke="#3b3b3b" stroke-width="1.200"><path d="M3 1 V15 H8 M3 8 H8" fill="none"/><rect x="2" y="1" width="6" height="3.500"/><rect x="8" y="5.500" width="6" height="4.500"/><rect x="9.500" y="12.500" width="5" height="4.500"/></g></svg>
<span class="t" style="font-size:11.2px;color:#1a1a1a;letter-spacing:0.222px;top:487.0px;line-height:16px;height:16px;left:36px;">Waist rotation *</span>
<div class="inp" style="top:504px"></div>
<span class="t" style="font-size:11.2px;color:#1a1a1a;letter-spacing:0.345px;top:505.5px;line-height:16px;height:16px;left:40px;">106.20deg</span>
<div class="spin" style="top:505px"></div>
<div class="abs" style="left:195px;top:513px;width:13px;height:1px;background:#d0d0d0"></div>
<svg style="left:197px;top:507px" width="8" height="14" viewBox="0 0 8 14"><path d="M1 5 L4 1.500 L7 5 Z M1 9 L4 12.500 L7 9 Z" fill="#222"/></svg>
<div class="btn" style="left:210px;top:504px"></div>
<svg style="left:212px;top:506px" width="20" height="20" viewBox="0 0 20 20"><path d="M5.500 9 V6.500 C5.500 1.500 14.500 1.500 14.500 6.500 V9" fill="none" stroke="#8f8f8f" stroke-width="2.200"/><rect x="2.500" y="8.500" width="15" height="10" rx="1.500" fill="#3f95cd" stroke="#14456b" stroke-width="1.100"/><rect x="3.600" y="9.600" width="12.800" height="3" fill="#8cc8ea"/><rect x="9" y="11.500" width="2" height="4.500" fill="#0f3654"/></svg>
<div class="sl" style="top:524px;background:linear-gradient(to right,#ececec 102px,#fff 102px)"><i class="tick" style="left:43px"></i><i class="tick" style="left:85px"></i><i class="tick" style="left:127px"></i></div>
<div class="thumb" style="left:135px;top:524px"></div>
<svg style="left:12px;top:504px" width="19" height="19" viewBox="0 0 19 19"><path d="M2 2 H9.500 L4.500 12 L8 17.500 H2 Z" fill="#1d4f73" stroke="#0f2e45" stroke-width=".8"/><path d="M9.500 2 L4.500 12 L8 17.500 H17 Z" fill="#c9c9c9" stroke="#555" stroke-width=".8"/><path d="M13 4 L8.500 12 M13 4 L10.500 5.500 M13 4 L13.300 7 M12 9 L17 16 M17 16 L14 15 M17 16 L16.800 13" fill="none" stroke="#111" stroke-width="1.200"/></svg>
<span class="t" style="font-size:11.2px;color:#1a1a1a;letter-spacing:0.228px;top:535.5px;line-height:16px;height:16px;left:36px;">Shoulder Angle *</span>
<div class="inp" style="top:553px"></div>
<span class="t" style="font-size:11.2px;color:#1a1a1a;letter-spacing:0.291px;top:554.5px;line-height:16px;height:16px;left:40px;">88.75deg</span>
<div class="spin" style="top:554px"></div>
<div class="abs" style="left:195px;top:562px;width:13px;height:1px;background:#d0d0d0"></div>
<svg style="left:197px;top:556px" width="8" height="14" viewBox="0 0 8 14"><path d="M1 5 L4 1.500 L7 5 Z M1 9 L4 12.500 L7 9 Z" fill="#222"/></svg>
<div class="btn" style="left:210px;top:553px"></div>
<svg style="left:212px;top:555px" width="20" height="20" viewBox="0 0 20 20"><path d="M5.500 9 V6.500 C5.500 1.500 14.500 1.500 14.500 6.500 V9" fill="none" stroke="#8f8f8f" stroke-width="2.200"/><rect x="2.500" y="8.500" width="15" height="10" rx="1.500" fill="#3f95cd" stroke="#14456b" stroke-width="1.100"/><rect x="3.600" y="9.600" width="12.800" height="3" fill="#8cc8ea"/><rect x="9" y="11.500" width="2" height="4.500" fill="#0f3654"/></svg>
<div class="sl" style="top:573px;background:linear-gradient(to right,#ececec 129px,#fff 129px)"><i class="tick" style="left:43px"></i><i class="tick" style="left:85px"></i><i class="tick" style="left:127px"></i></div>
<div class="thumb" style="left:162px;top:573px"></div>
<svg style="left:12px;top:553px" width="19" height="19" viewBox="0 0 19 19"><path d="M2 2 H9.500 L4.500 12 L8 17.500 H2 Z" fill="#1d4f73" stroke="#0f2e45" stroke-width=".8"/><path d="M9.500 2 L4.500 12 L8 17.500 H17 Z" fill="#c9c9c9" stroke="#555" stroke-width=".8"/><path d="M13 4 L8.500 12 M13 4 L10.500 5.500 M13 4 L13.300 7 M12 9 L17 16 M17 16 L14 15 M17 16 L16.800 13" fill="none" stroke="#111" stroke-width="1.200"/></svg>
<span class="t" style="font-size:11.2px;color:#1a1a1a;letter-spacing:0.227px;top:584.0px;line-height:16px;height:16px;left:36px;">Elbow Angle *</span>
<div class="inp" style="top:602px"></div>
<span class="t" style="font-size:11.2px;color:#1a1a1a;letter-spacing:0.291px;top:603.5px;line-height:16px;height:16px;left:40px;">94.80deg</span>
<div class="spin" style="top:603px"></div>
<div class="abs" style="left:195px;top:611px;width:13px;height:1px;background:#d0d0d0"></div>
<svg style="left:197px;top:605px" width="8" height="14" viewBox="0 0 8 14"><path d="M1 5 L4 1.500 L7 5 Z M1 9 L4 12.500 L7 9 Z" fill="#222"/></svg>
<div class="btn" style="left:210px;top:602px"></div>
<svg style="left:212px;top:604px" width="20" height="20" viewBox="0 0 20 20"><path d="M5.500 9 V6.500 C5.500 1.500 14.500 1.500 14.500 6.500 V9" fill="none" stroke="#8f8f8f" stroke-width="2.200"/><rect x="2.500" y="8.500" width="15" height="10" rx="1.500" fill="#3f95cd" stroke="#14456b" stroke-width="1.100"/><rect x="3.600" y="9.600" width="12.800" height="3" fill="#8cc8ea"/><rect x="9" y="11.500" width="2" height="4.500" fill="#0f3654"/></svg>
<div class="sl" style="top:622px;background:linear-gradient(to right,#ececec 93px,#fff 93px)"><i class="tick" style="left:43px"></i><i class="tick" style="left:85px"></i><i class="tick" style="left:127px"></i></div>
<div class="thumb" style="left:126px;top:622px"></div>
<svg style="left:12px;top:602px" width="19" height="19" viewBox="0 0 19 19"><path d="M2 2 H9.500 L4.500 12 L8 17.500 H2 Z" fill="#1d4f73" stroke="#0f2e45" stroke-width=".8"/><path d="M9.500 2 L4.500 12 L8 17.500 H17 Z" fill="#c9c9c9" stroke="#555" stroke-width=".8"/><path d="M13 4 L8.500 12 M13 4 L10.500 5.500 M13 4 L13.300 7 M12 9 L17 16 M17 16 L14 15 M17 16 L16.800 13" fill="none" stroke="#111" stroke-width="1.200"/></svg>
<span class="t" style="font-size:11.2px;color:#1a1a1a;letter-spacing:0.280px;top:633.0px;line-height:16px;height:16px;left:36px;">Wrist Rotation *</span>
<div class="inp" style="top:650px"></div>
<span class="t" style="font-size:11.2px;color:#1a1a1a;letter-spacing:0.291px;top:651.5px;line-height:16px;height:16px;left:40px;">48.60deg</span>
<div class="spin" style="top:651px"></div>
<div class="abs" style="left:195px;top:659px;width:13px;height:1px;background:#d0d0d0"></div>
<svg style="left:197px;top:653px" width="8" height="14" viewBox="0 0 8 14"><path d="M1 5 L4 1.500 L7 5 Z M1 9 L4 12.500 L7 9 Z" fill="#222"/></svg>
<div class="btn" style="left:210px;top:650px"></div>
<svg style="left:212px;top:652px" width="20" height="20" viewBox="0 0 20 20"><path d="M5.500 9 V6.500 C5.500 1.500 14.500 1.500 14.500 6.500 V9" fill="none" stroke="#8f8f8f" stroke-width="2.200"/><rect x="2.500" y="8.500" width="15" height="10" rx="1.500" fill="#3f95cd" stroke="#14456b" stroke-width="1.100"/><rect x="3.600" y="9.600" width="12.800" height="3" fill="#8cc8ea"/><rect x="9" y="11.500" width="2" height="4.500" fill="#0f3654"/></svg>
<div class="sl" style="top:670px;background:linear-gradient(to right,#ececec 48px,#fff 48px)"><i class="tick" style="left:43px"></i><i class="tick" style="left:85px"></i><i class="tick" style="left:127px"></i></div>
<div class="thumb" style="left:81px;top:670px"></div>
<svg style="left:12px;top:650px" width="19" height="19" viewBox="0 0 19 19"><path d="M2 2 H9.500 L4.500 12 L8 17.500 H2 Z" fill="#1d4f73" stroke="#0f2e45" stroke-width=".8"/><path d="M9.500 2 L4.500 12 L8 17.500 H17 Z" fill="#c9c9c9" stroke="#555" stroke-width=".8"/><path d="M13 4 L8.500 12 M13 4 L10.500 5.500 M13 4 L13.300 7 M12 9 L17 16 M17 16 L14 15 M17 16 L16.800 13" fill="none" stroke="#111" stroke-width="1.200"/></svg>
<span class="t" style="font-size:11.2px;color:#1a1a1a;letter-spacing:0.194px;top:682.0px;line-height:16px;height:16px;left:36px;">Finger Angle *</span>
<div class="inp" style="top:700px"></div>
<span class="t" style="font-size:11.2px;color:#1a1a1a;letter-spacing:0.291px;top:701.5px;line-height:16px;height:16px;left:40px;">30.60deg</span>
<div class="spin" style="top:701px"></div>
<div class="abs" style="left:195px;top:709px;width:13px;height:1px;background:#d0d0d0"></div>
<svg style="left:197px;top:703px" width="8" height="14" viewBox="0 0 8 14"><path d="M1 5 L4 1.500 L7 5 Z M1 9 L4 12.500 L7 9 Z" fill="#222"/></svg>
<div class="btn" style="left:210px;top:700px"></div>
<svg style="left:212px;top:702px" width="20" height="20" viewBox="0 0 20 20"><path d="M5.500 9 V6.500 C5.500 1.500 14.500 1.500 14.500 6.500 V9" fill="none" stroke="#8f8f8f" stroke-width="2.200"/><rect x="2.500" y="8.500" width="15" height="10" rx="1.500" fill="#3f95cd" stroke="#14456b" stroke-width="1.100"/><rect x="3.600" y="9.600" width="12.800" height="3" fill="#8cc8ea"/><rect x="9" y="11.500" width="2" height="4.500" fill="#0f3654"/></svg>
<div class="sl" style="top:720px;background:linear-gradient(to right,#ececec 87px,#fff 87px)"><i class="tick" style="left:43px"></i><i class="tick" style="left:85px"></i><i class="tick" style="left:127px"></i></div>
<div class="thumb" style="left:120px;top:720px"></div>
<svg style="left:12px;top:700px" width="19" height="19" viewBox="0 0 19 19"><path d="M2 2 H9.500 L4.500 12 L8 17.500 H2 Z" fill="#1d4f73" stroke="#0f2e45" stroke-width=".8"/><path d="M9.500 2 L4.500 12 L8 17.500 H17 Z" fill="#c9c9c9" stroke="#555" stroke-width=".8"/><path d="M13 4 L8.500 12 M13 4 L10.500 5.500 M13 4 L13.300 7 M12 9 L17 16 M17 16 L14 15 M17 16 L16.800 13" fill="none" stroke="#111" stroke-width="1.200"/></svg>
<div class="abs" style="left:243px;top:563px;width:8px;height:38px;background:#f7f7f7;border:1px solid #a9a9a9;border-left:none"></div>
<div class="abs" style="left:244px;top:579px;width:5px;height:5px;border-radius:50%;background:#d8d8d8;border:1px solid #a5a5a5"></div>
<div class="hl" style="left:5px;top:742px;width:231px"></div>
<span class="t" style="font-size:11.2px;font-weight:bold;color:#414141;letter-spacing:0.033px;top:749.0px;line-height:16px;height:16px;left:9px;">Animation</span>
<svg style="left:221px;top:752px" width="12" height="8" viewBox="0 0 12 8"><path d="M1.500 6.500 L6 2 L10.500 6.500" fill="none" stroke="#555" stroke-width="1.700"/></svg>
<div class="abs" style="left:9px;top:770px;width:223px;height:121px;background:#fff;border:1px solid #dadada;border-left:2px solid #6a6a6a;border-top:2px solid #6a6a6a"></div>
<div class="abs" style="left:10px;top:771px;width:222px;height:21px;background:#f0f0f0;border:1px solid #2e2e2e"></div>
<div class="abs" style="left:10px;top:791px;width:222px;height:17px;background:#f3f3f3;border:1px solid #2e2e2e"></div>
<div class="abs" style="left:32px;top:771px;width:1px;height:37px;background:#2e2e2e"></div>
<div class="abs" style="left:186px;top:771px;width:1px;height:37px;background:#2e2e2e"></div>
<span class="t" style="font-size:11.2px;font-weight:bold;color:#1a1a1a;letter-spacing:-0.257px;top:773.5px;line-height:16px;height:16px;left:36px;">Position State</span>
<span class="t" style="font-size:11.2px;font-weight:bold;color:#1a1a1a;letter-spacing:-0.230px;top:773.5px;line-height:16px;height:16px;left:197px;">Time</span>
<span class="t" style="font-size:12px;font-weight:bold;color:#1a1a1a;top:791.5px;line-height:16px;height:16px;left:13px;">1</span>
<span class="t" style="font-size:11.2px;color:#1a1a1a;letter-spacing:0.086px;top:791.5px;line-height:16px;height:16px;left:36px;">Position 1</span>
<span class="t" style="font-size:12px;color:#1a1a1a;top:791.5px;line-height:16px;height:16px;left:190px;">-</span>
<div class="abs" style="left:9px;top:901px;width:13px;height:13px;border-radius:50%;border:1px solid #b5b5b5;background:#fdfdfd"></div>
<div class="abs" style="left:11px;top:903px;width:9px;height:9px;border-radius:50%;border:2.500px solid #cdcdcd;background:#fff"></div>
<span class="t" style="font-size:11.2px;color:#6f6f6f;letter-spacing:0.159px;top:900.0px;line-height:16px;height:16px;left:25px;">All Positions</span>
<div class="abs" style="left:9px;top:922px;width:13px;height:13px;border-radius:50%;border:1px solid #b5b5b5;background:#fff"></div>
<span class="t" style="font-size:11.2px;color:#6f6f6f;letter-spacing:0.024px;top:921.0px;line-height:16px;height:16px;left:25px;">Select Positions</span>
<div class="abs" style="left:86px;top:945px;width:24px;height:24px;background:#b1b1b1;border:1px solid #8d8d8d"></div>
<svg style="left:11px;top:948px" width="20" height="19" viewBox="0 0 20 19"><rect x="1" y="1" width="13" height="14" fill="#f1f1f1" stroke="#ababab"/><path d="M1 4.500 H14 M1 8 H14 M1 11.500 H14 M5.500 1 V15 M10 1 V15" stroke="#b5b5b5" stroke-width=".9"/><circle cx="14.500" cy="14" r="3.400" fill="#a9a9a9" stroke="#8f8f8f"/><circle cx="14.500" cy="14" r="1.200" fill="#f3f3f3"/></svg>
<svg style="left:41px;top:951px" width="11" height="12" viewBox="0 0 11 12"><path d="M1 1 L10 6 L1 11 Z" fill="#b9b9b9"/></svg>
<svg style="left:67px;top:952px" width="10" height="10" viewBox="0 0 10 10"><rect width="10" height="10" fill="#b5b5b5"/></svg>
<svg style="left:90px;top:951px" width="17" height="12" viewBox="0 0 17 12"><path d="M1 6 H13 M9 1.500 L14 6 L9 10.500" fill="none" stroke="#4a4a4a" stroke-width="1.900"/></svg>
<svg style="left:114px;top:952px" width="19" height="10" viewBox="0 0 19 10"><path d="M2 5 H17 M5 1.500 L1.500 5 L5 8.500 M14 1.500 L17.500 5 L14 8.500" fill="none" stroke="#9d9d9d" stroke-width="1.400"/></svg>
<svg style="left:140px;top:950px" width="18" height="14" viewBox="0 0 18 14"><path d="M6 11 H5.500 C-.5 11 -.5 2 5.500 2 H12 C18 2 18 10.500 12.500 10.500 H9 M11.500 7.500 L8.500 10.500 L11.500 13.500" fill="none" stroke="#a3a3a3" stroke-width="1.500"/></svg>
<svg style="left:165px;top:947px" width="20" height="20" viewBox="0 0 20 20"><rect x="1" y="1" width="11" height="16" fill="#d3d3d3" stroke="#a9a9a9"/><path d="M3 1 V17 M10 1 V17" stroke="#f1f1f1" stroke-dasharray="1.500 1.500" stroke-width="1.500"/><rect x="8" y="8" width="10.500" height="10.500" fill="#c9c9c9" stroke="#a1a1a1"/><rect x="10.500" y="8" width="5" height="3.500" fill="#ededed"/><rect x="10.500" y="14" width="5.500" height="4" fill="#e4e4e4"/></svg>
<div class="abs" style="left:9px;top:977px;width:224px;height:29px;background:#ececec;border:1px solid #c9c9c9"></div>
<div class="abs" style="left:10px;top:998px;width:222px;height:7px;background:#fdfdfd;border-top:1px solid #dadada"></div>
<div class="abs" style="left:65px;top:998px;width:1px;height:6px;background:#bdbdbd"></div>
<div class="abs" style="left:120px;top:998px;width:1px;height:6px;background:#bdbdbd"></div>
<div class="abs" style="left:174px;top:998px;width:1px;height:6px;background:#bdbdbd"></div>
<div class="thumb" style="left:9px;top:998px;height:11px"></div>
<div class="hl" style="left:110px;top:1043px;width:20px;background:#cfcfcf"></div>
<div id="viewport" class="abs"></div>
<div class="abs" style="left:613px;top:116px;width:1307px;height:1px;background:#9a9a9a"></div>
<svg style="left:0;top:0" width="1920" height="1080" viewBox="0 0 1920 1080"><defs>
<linearGradient id="shA" x1="860" y1="0" x2="1400" y2="0" gradientUnits="userSpaceOnUse"><stop offset="0" stop-color="#7a7a7a"/><stop offset=".18" stop-color="#6a6a6a"/><stop offset=".36" stop-color="#5f5f5f"/><stop offset=".7" stop-color="#5c5c5c"/><stop offset="1" stop-color="#626262"/></linearGradient>
<linearGradient id="refl" x1="0" y1="0" x2="0" y2="1"><stop offset="0" stop-color="#d9d9d9"/><stop offset=".35" stop-color="#ececec"/><stop offset="1" stop-color="#fbfbfb"/></linearGradient>
<linearGradient id="legG" x1="0" y1="0" x2="1" y2="0"><stop offset="0" stop-color="#2c2a2a"/><stop offset=".46" stop-color="#363434"/><stop offset=".5" stop-color="#7d7d7d"/><stop offset=".54" stop-color="#484848"/><stop offset="1" stop-color="#3f3f3f"/></linearGradient>
<linearGradient id="armG" x1="0" y1="0" x2="0" y2="1"><stop offset="0" stop-color="#ec8e2d"/><stop offset="1" stop-color="#e58529"/></linearGradient>
<linearGradient id="colG" x1="0" y1="0" x2="1" y2="0"><stop offset="0" stop-color="#f5a440"/><stop offset=".5" stop-color="#ea8b2c"/><stop offset="1" stop-color="#de8122"/></linearGradient>
<linearGradient id="ringG" x1="0" y1="0" x2="1" y2="0"><stop offset="0" stop-color="#d97e1d"/><stop offset=".3" stop-color="#f9b45a"/><stop offset=".6" stop-color="#ee912b"/><stop offset="1" stop-color="#c8700f"/></linearGradient>
<linearGradient id="silG" x1="0" y1="0" x2="1" y2="0"><stop offset="0" stop-color="#8f9499"/><stop offset=".35" stop-color="#fbfbfb"/><stop offset=".7" stop-color="#c4c8cc"/><stop offset="1" stop-color="#7d8186"/></linearGradient>
<linearGradient id="baseG" x1="0" y1="0" x2="1" y2="0"><stop offset="0" stop-color="#f49c31"/><stop offset=".5" stop-color="#f7a53c"/><stop offset="1" stop-color="#ee8f28"/></linearGradient>
<linearGradient id="baseT" x1="0" y1="0" x2="1" y2="1"><stop offset="0" stop-color="#f9bb68"/><stop offset="1" stop-color="#fdd59c"/></linearGradient>
<linearGradient id="plG" x1="0" y1="0" x2="1" y2="1"><stop offset="0" stop-color="#b6b6b6"/><stop offset="1" stop-color="#a7a7a7"/></linearGradient>
</defs>
<rect x="1049" y="889" width="29" height="156" fill="url(#refl)" opacity=".75"/>
<rect x="1180" y="845" width="26" height="200" fill="url(#refl)" opacity=".75"/>
<rect x="1224" y="955" width="32" height="90" fill="url(#refl)" opacity=".75"/>
<rect x="1352" y="901" width="32" height="144" fill="url(#refl)" opacity=".75"/>
<path d="M1046 1045 L1075 1032 L1165 998 L1200 990 L1212 1000 L1245 1006 L1300 1030 L1350 1045 Z" fill="#f4f4f4" opacity=".8"/>
<path d="M860 852 L891 831 L905 806 L937 806 L943 802 L965 801.5 L973 794 L969 787 L990 784 L996 790 L1050 785.5 L1050 808 L1020 814.5 L1046 818.5 L1030 843 L1015 844 L1008 865 L997 866.6 L1006 844 L998 843.6 L913 836 L893 835 L868 854 Z" fill="url(#shA)" stroke="none" stroke-width="1.25" stroke-linejoin="round" />
<path d="M966 785.5 L972 781 L1050 773 L1050 779 L990 786.5 Z" fill="url(#shA)" stroke="none" stroke-width="1.25" stroke-linejoin="round" />
<path d="M1008 794 L1019 793 L1021 797 L1010 798 Z" fill="#fff" stroke="none" stroke-width="1.25" stroke-linejoin="round" />
<path d="M1012 802 L1022 800 L1026 804 L1016 806 Z" fill="#fff" stroke="none" stroke-width="1.25" stroke-linejoin="round" />
<path d="M1078 770.5 L1154 760 L1156 756 L1182 752 L1182 800 L1119 790 L1079 792 Z" fill="url(#shA)" stroke="none" stroke-width="1.25" stroke-linejoin="round" />
<path d="M1119 790 L1129 801 L1130 819 L1135 824 L1080 846 L1079 849 L1097 856 L1221 895 L1224 940 L1254 940 L1270 903 L1394 854 L1382 850 L1352 838 L1305 826 L1307 816 L1282 810 L1264 810 L1287 801 L1278 796 L1298 772 L1317 762 L1298 755 L1284 766 L1277 774 L1257 796 L1257 766 L1182 752 Z" fill="url(#shA)" stroke="none" stroke-width="1.25" stroke-linejoin="round" />
<path d="M1166 784 L1177 783 L1176 788 Z" fill="#fff" stroke="none" stroke-width="1.25" stroke-linejoin="round" />
<path d="M884 826 C868 828 866 838 882 838 M1018 836 C1034 836 1034 846 1016 848" fill="none" stroke="#8a8a8a" stroke-width="0.8" stroke-linecap="round" stroke-linejoin="round" />
<path d="M1180 752 L1206 757 L1205 838 L1180 836 Z" fill="url(#legG)" stroke="#1c1c1c" stroke-width="1.25" stroke-linejoin="round" />
<path d="M1175 835 L1180 833 L1206 836 L1208 840 L1192 845 L1175 840 Z" fill="#2f2f2f" stroke="#1c1c1c" stroke-width="1.25" stroke-linejoin="round" />
<path d="M1354 728 L1386 722 L1384 892 L1352 893 Z" fill="url(#legG)" stroke="#1c1c1c" stroke-width="1.25" stroke-linejoin="round" />
<path d="M1346 892 L1352 890 L1384 890 L1381 897 L1360 901 L1346 896 Z" fill="#2f2f2f" stroke="#1c1c1c" stroke-width="1.25" stroke-linejoin="round" />
<path d="M1340 733 L1354 731 L1354 752 Z" fill="#474747" stroke="#1c1c1c" stroke-width="1.25" stroke-linejoin="round" />
<path d="M1049 712 L1079 719 L1078 882 L1050 880 Z" fill="url(#legG)" stroke="#1c1c1c" stroke-width="1.25" stroke-linejoin="round" />
<path d="M1044 880 L1050 878 L1078 880 L1080 885 L1062 889 L1044 884 Z" fill="#2f2f2f" stroke="#1c1c1c" stroke-width="1.25" stroke-linejoin="round" />
<path d="M1079 721 L1096 724 L1079 744 Z" fill="#474747" stroke="#1c1c1c" stroke-width="1.25" stroke-linejoin="round" />
<path d="M1049 695 L1068 691 L1354 696 L1388 704 L1243 745 Z" fill="#2b2b2b" stroke="#0a0a0a" stroke-width="1.25" stroke-linejoin="round" />
<path d="M1049 695 L1243 745 L1243 768 L1050 714 Z" fill="#343232" stroke="#0a0a0a" stroke-width="1.25" stroke-linejoin="round" />
<path d="M1243 745 L1388 704 L1388 727 L1243 768 Z" fill="#464646" stroke="#0a0a0a" stroke-width="1.25" stroke-linejoin="round" />
<path d="M1052 698 L1243 747 L1386 707" fill="none" stroke="#5a5a5a" stroke-width="1" stroke-linecap="round" stroke-linejoin="round" />
<path d="M1223 762 L1257 763 L1255 945 L1225 944 Z" fill="url(#legG)" stroke="#1c1c1c" stroke-width="1.25" stroke-linejoin="round" />
<path d="M1216 943 L1224 940 L1255 941 L1255 949 L1236 955 L1216 948 Z" fill="#2f2f2f" stroke="#1c1c1c" stroke-width="1.25" stroke-linejoin="round" />
<path d="M1205 757 L1223 762 L1223 790 Z" fill="#474747" stroke="#1c1c1c" stroke-width="1.25" stroke-linejoin="round" />
<path d="M1257 763 L1272 760 L1257 784 Z" fill="#474747" stroke="#1c1c1c" stroke-width="1.25" stroke-linejoin="round" />
<path d="M1063 687 L1088 678 L1101 683 L1108 694 L1098 700 L1072 694 Z" fill="#f8b866" stroke="#1f0e00" stroke-width="0.9" stroke-linejoin="round" />
<path d="M1065 690 L1098 698" fill="none" stroke="#1f0e00" stroke-width="0.7" stroke-linecap="round" stroke-linejoin="round" />
<ellipse cx="1092" cy="681" rx="2.8" ry="1.8" fill="#f3a03d" stroke="#1f0e00" stroke-width="0.8" />
<ellipse cx="1092" cy="689" rx="2.8" ry="1.8" fill="#f3a03d" stroke="#1f0e00" stroke-width="0.8" />
<path d="M1088 678 L1103 648 C1108 640 1116 638 1122 640 L1130 650 L1240 660 L1240 727 L1225 732 L1208 727 L1176 714 C1150 712 1125 704 1115 698 L1098 699 Z" fill="url(#baseG)" stroke="#1f0e00" stroke-width="1.25" stroke-linejoin="round" />
<path d="M1113 665 L1115 698 M1178 680 L1176 714" fill="none" stroke="#1f0e00" stroke-width="0.9" stroke-linecap="round" stroke-linejoin="round" />
<path d="M1126 676 L1127 703" fill="none" stroke="#fbc27a" stroke-width="2.2" stroke-linecap="round" stroke-linejoin="round" />
<path d="M1140 676.84 L1141 705.8" fill="none" stroke="#fbc27a" stroke-width="2.2" stroke-linecap="round" stroke-linejoin="round" />
<path d="M1156 677.8 L1157 709" fill="none" stroke="#fbc27a" stroke-width="2.2" stroke-linecap="round" stroke-linejoin="round" />
<path d="M1192 679.96 L1193 716.2" fill="none" stroke="#fbc27a" stroke-width="2.2" stroke-linecap="round" stroke-linejoin="round" />
<path d="M1208 680.92 L1209 719.4" fill="none" stroke="#fbc27a" stroke-width="2.2" stroke-linecap="round" stroke-linejoin="round" />
<path d="M1224 681.88 L1225 722.6" fill="none" stroke="#fbc27a" stroke-width="2.2" stroke-linecap="round" stroke-linejoin="round" />
<path d="M1240 681 L1282 687 L1275 735 L1240 724 Z" fill="#f59d30" stroke="#1f0e00" stroke-width="1" stroke-linejoin="round" />
<path d="M1282 687 L1355 669 L1354 711 L1275 735 Z" fill="#ee8c25" stroke="#1f0e00" stroke-width="1" stroke-linejoin="round" />
<path d="M1240 681 L1250 672 L1284 648 L1310 655 L1355 669 L1282 687 Z" fill="url(#baseT)" stroke="#1f0e00" stroke-width="1" stroke-linejoin="round" />
<path d="M1302 672 L1310 669 L1316 671 L1308 674 Z" fill="#f6ad52" stroke="#1f0e00" stroke-width="0.7" stroke-linejoin="round" />
<path d="M1108 652 C1112 634 1160 628 1204 630 C1250 632 1286 642 1288 654 C1290 668 1254 680 1200 680 C1150 680 1108 668 1108 652 Z" fill="#f8b25c" stroke="#1f0e00" stroke-width="0.9" stroke-linejoin="round" />
<path d="M1115.6 660.013 L1124.6 660.313 L1124.1 665.513 L1115.1 665.213 Z" fill="#fcd9a6" stroke="#1f0e00" stroke-width="0.7" stroke-linejoin="round" />
<path d="M1122.87 664.348 L1131.87 664.648 L1131.37 669.848 L1122.37 669.548 Z" fill="#fcd9a6" stroke="#1f0e00" stroke-width="0.7" stroke-linejoin="round" />
<path d="M1133.99 668.14 L1142.99 668.44 L1142.49 673.64 L1133.49 673.34 Z" fill="#fcd9a6" stroke="#1f0e00" stroke-width="0.7" stroke-linejoin="round" />
<path d="M1148.35 671.178 L1157.35 671.478 L1156.85 676.678 L1147.85 676.378 Z" fill="#fcd9a6" stroke="#1f0e00" stroke-width="0.7" stroke-linejoin="round" />
<path d="M1165.14 673.294 L1174.14 673.594 L1173.64 678.794 L1164.64 678.494 Z" fill="#fcd9a6" stroke="#1f0e00" stroke-width="0.7" stroke-linejoin="round" />
<path d="M1183.44 674.371 L1192.44 674.671 L1191.94 679.871 L1182.94 679.571 Z" fill="#fcd9a6" stroke="#1f0e00" stroke-width="0.7" stroke-linejoin="round" />
<path d="M1202.25 674.351 L1211.25 674.651 L1210.75 679.851 L1201.75 679.551 Z" fill="#fcd9a6" stroke="#1f0e00" stroke-width="0.7" stroke-linejoin="round" />
<path d="M1220.52 673.233 L1229.52 673.533 L1229.02 678.733 L1220.02 678.433 Z" fill="#fcd9a6" stroke="#1f0e00" stroke-width="0.7" stroke-linejoin="round" />
<path d="M1237.24 671.081 L1246.24 671.381 L1245.74 676.581 L1236.74 676.281 Z" fill="#fcd9a6" stroke="#1f0e00" stroke-width="0.7" stroke-linejoin="round" />
<path d="M1251.48 668.012 L1260.48 668.312 L1259.98 673.512 L1250.98 673.212 Z" fill="#fcd9a6" stroke="#1f0e00" stroke-width="0.7" stroke-linejoin="round" />
<path d="M1262.47 664.196 L1271.47 664.496 L1270.97 669.696 L1261.97 669.396 Z" fill="#fcd9a6" stroke="#1f0e00" stroke-width="0.7" stroke-linejoin="round" />
<path d="M1269.59 659.845 L1278.59 660.145 L1278.09 665.345 L1269.09 665.045 Z" fill="#fcd9a6" stroke="#1f0e00" stroke-width="0.7" stroke-linejoin="round" />
<path d="M1272.45 655.198 L1281.45 655.498 L1280.95 660.698 L1271.95 660.398 Z" fill="#fcd9a6" stroke="#1f0e00" stroke-width="0.7" stroke-linejoin="round" />
<path d="M1176 717 L1188 710 L1230 712 L1239 720 L1225 732 L1208 727 Z" fill="#f9c07a" stroke="#1f0e00" stroke-width="0.9" stroke-linejoin="round" />
<path d="M1176 719 L1208 730 L1225 735 L1239 723" fill="none" stroke="#1f0e00" stroke-width="0.7" stroke-linecap="round" stroke-linejoin="round" />
<ellipse cx="1196" cy="715" rx="3.4" ry="2" fill="#f3a03d" stroke="#1f0e00" stroke-width="0.8" />
<ellipse cx="1222" cy="716" rx="3.4" ry="2" fill="#f3a03d" stroke="#1f0e00" stroke-width="0.8" />
<path d="M1246 646 L1262 642 L1276 648 L1278 664 L1262 668 L1248 664 Z" fill="#f29a36" stroke="#1f0e00" stroke-width="0.9" stroke-linejoin="round" />
<path d="M1143 612 L1143 630 C1150 646 1262 650 1268 630 L1268 608 Z" fill="url(#ringG)" stroke="#1f0e00" stroke-width="1.25" stroke-linejoin="round" />
<path d="M1148 640 L1152 652 C1165 666 1240 668 1256 654 L1260 640 C1250 654 1160 654 1148 640 Z" fill="url(#ringG)" stroke="#1f0e00" stroke-width="1.25" stroke-linejoin="round" />
<path d="M1146 636 C1160 652 1250 654 1262 637" fill="none" stroke="#161616" stroke-width="4" stroke-linecap="round" stroke-linejoin="round" />
<path d="M1143 622 C1160 638 1250 640 1268 620" fill="none" stroke="#1f0e00" stroke-width="0.9" stroke-linecap="round" stroke-linejoin="round" />
<ellipse cx="1242" cy="627" rx="5.2" ry="6.2" fill="#1e1e1e" stroke="#000" stroke-width="0.8" />
<path d="M1226 246 L1250 256 L1249 330 L1242 494 L1224 488 L1226 400 L1228 300 Z" fill="url(#colG)" stroke="#1f0e00" stroke-width="1.25" stroke-linejoin="round" />
<path d="M1241 262 L1236 400 L1232 490 M1234 262 L1230 400 L1228 488" fill="none" stroke="#1f0e00" stroke-width="0.8" stroke-linecap="round" stroke-linejoin="round" />
<ellipse cx="1234" cy="492" rx="9" ry="7" fill="#e98a2c" stroke="#1f0e00" stroke-width="1.25" />
<path d="M1190 248 L1200 250 L1198 320 L1195 400 L1184 440 L1172 446 L1176 400 L1182 330 Z" fill="#d97e1d" stroke="#1f0e00" stroke-width="1" stroke-linejoin="round" />
<path d="M1195 252 L1193 320 L1188 400 L1178 440 M1191 300 L1184 400" fill="none" stroke="#1f0e00" stroke-width="0.8" stroke-linecap="round" stroke-linejoin="round" />
<path d="M1118 247 C1114 280 1108 310 1104 360 C1100 420 1102 460 1106 494 L1130 520 L1176 470 C1172 420 1176 360 1184 320 C1190 290 1196 270 1197 250 L1160 232 Z" fill="url(#colG)" stroke="#1f0e00" stroke-width="1.25" stroke-linejoin="round" />
<linearGradient id="pkG" x1="0" y1="0" x2="1" y2="0"><stop offset="0" stop-color="#f9a83c"/><stop offset=".6" stop-color="#ee902d"/><stop offset="1" stop-color="#e0821f"/></linearGradient>
<path d="M1120 268 C1116 290 1112 318 1116 326 C1120 334 1132 332 1137 322 C1142 308 1146 292 1148 278 L1140 270 Z" fill="url(#pkG)" stroke="#1f0e00" stroke-width="1" stroke-linejoin="round" />
<path d="M1122 333 L1116 400 L1116 480" fill="none" stroke="#1f0e00" stroke-width="0.9" stroke-linecap="round" stroke-linejoin="round" />
<path d="M1153 240 C1156 228 1168 224 1180 224 C1190 226 1195 236 1193 250 L1180 337 L1173 402 L1173 454 L1134 470 L1131 400 L1143 303 Z" fill="#e98a2c" stroke="#1f0e00" stroke-width="1.25" stroke-linejoin="round" />
<path d="M1158 240 L1147 303 L1136 400 L1138 466" fill="none" stroke="#1f0e00" stroke-width="0.9" stroke-linecap="round" stroke-linejoin="round" />
<path d="M1159 329 C1166 326 1171 330 1170 338 L1163 384 C1161 390 1148 392 1146 386 C1146 366 1151 346 1159 329 Z" fill="#b8660f" stroke="#1f0e00" stroke-width="1" stroke-linejoin="round" />
<path d="M1160 336 L1168 338 L1162 384 L1154 386 Z" fill="#d27818" stroke="none" stroke-width="1.25" stroke-linejoin="round" />
<path d="M1161 331 L1154 388 M1154 338 L1166 337" fill="none" stroke="#1f0e00" stroke-width="0.7" stroke-linecap="round" stroke-linejoin="round" />
<path d="M1174 446 C1186 440 1200 446 1203 456 C1204 464 1196 470 1186 470 L1174 466 Z" fill="#e98a2c" stroke="#1f0e00" stroke-width="0.9" stroke-linejoin="round" />
<path d="M1046 464 L1074 464 L1072 516 L1056 511 L1046 505 Z" fill="#4a4ae2" stroke="#15158a" stroke-width="1.25" stroke-linejoin="round" />
<path d="M1046 464 L1074 464 L1070 475 L1046 474 Z" fill="#6f6ff0" stroke="#15158a" stroke-width="0.8" stroke-linejoin="round" />
<path d="M1046 486 L1070 490" fill="none" stroke="#15158a" stroke-width="0.8" stroke-linecap="round" stroke-linejoin="round" />
<path d="M1070 472 L1100 457 L1122 462 L1124 520 L1130 534 L1132 600 L1104 594 L1087 586 L1078 540 L1074 518 Z" fill="#e98a2c" stroke="#1f0e00" stroke-width="1.25" stroke-linejoin="round" />
<path d="M1090 474 C1082 500 1084 530 1100 548 L1112 552 L1112 470 Z" fill="#d97e1d" stroke="#1f0e00" stroke-width="0.9" stroke-linejoin="round" />
<path d="M1097 478 C1090 500 1092 528 1104 542 L1112 544 L1112 476 Z" fill="#e98a2c" stroke="#1f0e00" stroke-width="0.8" stroke-linejoin="round" />
<ellipse cx="1080" cy="476" rx="3" ry="3.6" fill="#f5a23e" stroke="#1f0e00" stroke-width="0.9" />
<path d="M1076 520 L1090 580 M1082 518 L1094 575" fill="none" stroke="#1f0e00" stroke-width="0.8" stroke-linecap="round" stroke-linejoin="round" />
<path d="M1094 552 L1108 540 L1112 548 L1100 562 Z" fill="#f5a23e" stroke="#1f0e00" stroke-width="0.8" stroke-linejoin="round" />
<path d="M1102 562 L1124 556 L1125 580 L1102 578 Z" fill="#fff" stroke="#1f0e00" stroke-width="0.8" stroke-linejoin="round" />
<path d="M1102 580 L1126 580 L1128 597 L1104 592 Z" fill="#fbd9a8" stroke="#1f0e00" stroke-width="0.8" stroke-linejoin="round" />
<path d="M1126 534 L1150 500 L1226 520 L1230 560 L1230 606 L1160 615 L1130 600 Z" fill="#f4a141" stroke="#1f0e00" stroke-width="1.25" stroke-linejoin="round" />
<path d="M1168 572 L1226 545 L1230 606 L1188 612 Z" fill="#cf7b25" stroke="none" stroke-width="1.25" stroke-linejoin="round" />
<path d="M1150 575 L1172 568 L1192 612 L1160 615 Z" fill="#ec9234" stroke="none" stroke-width="1.25" stroke-linejoin="round" />
<path d="M1144 572 L1160 615" fill="none" stroke="#1f0e00" stroke-width="0.9" stroke-linecap="round" stroke-linejoin="round" />
<path d="M1121 477 C1128 470 1150 466 1160 467 L1193 469 C1208 474 1216 484 1220 494 L1222 540 C1214 560 1196 570 1178 568 L1146 574 L1128 560 L1118 500 Z" fill="#e98a2c" stroke="#1f0e00" stroke-width="1.25" stroke-linejoin="round" />
<ellipse cx="1180" cy="519" rx="36" ry="50" fill="#f2993a" stroke="#1f0e00" stroke-width="1.25" transform="rotate(10 1180 519)"/>
<ellipse cx="1184" cy="521" rx="29" ry="42" fill="#d97e1d" stroke="#1f0e00" stroke-width="1.25" transform="rotate(10 1184 521)"/>
<ellipse cx="1190" cy="523" rx="24" ry="36" fill="#f09030" stroke="#1f0e00" stroke-width="1.25" transform="rotate(10 1190 523)"/>
<path d="M1122 484 L1132 476 L1140 482 L1142 498 L1128 500 Z" fill="#f5a23e" stroke="#1f0e00" stroke-width="0.9" stroke-linejoin="round" />
<ellipse cx="1128" cy="487" rx="3.2" ry="4" fill="#f5a23e" stroke="#1f0e00" stroke-width="0.9" />
<path d="M1146 574 L1166 562 M1150 578 L1170 566" fill="none" stroke="#1f0e00" stroke-width="0.8" stroke-linecap="round" stroke-linejoin="round" />
<path d="M1140 462 L1150 456 L1156 458 L1156 466 L1148 470 L1140 468 Z" fill="#f5a23e" stroke="#1f0e00" stroke-width="0.8" stroke-linejoin="round" />
<path d="M1176 450 L1192 446 L1202 456 L1198 470 L1176 466 Z" fill="#e98a2c" stroke="#1f0e00" stroke-width="0.9" stroke-linejoin="round" />
<path d="M1229 526 L1280 527 L1280 588 L1262 596 L1229 594 Z" fill="#a6a6fb" stroke="#15158a" stroke-width="1.25" stroke-linejoin="round" />
<path d="M1256 530 L1271 533 L1271 592 L1256 596 Z" fill="#9090f6" stroke="#15158a" stroke-width="0.8" stroke-linejoin="round" />
<path d="M1271 533 L1280 527 L1280 588 L1271 592 Z" fill="#4a4ad8" stroke="#15158a" stroke-width="0.8" stroke-linejoin="round" />
<path d="M1256 530 L1262 525.5 L1280 527 L1271 533 Z" fill="#8c8cf6" stroke="#15158a" stroke-width="0.8" stroke-linejoin="round" />
<path d="M1167 496 L1184 494 L1184 550 L1167 545 Z" fill="#5252e8" stroke="#15158a" stroke-width="0.9" stroke-linejoin="round" />
<path d="M1184 502 L1204 494 L1256 507 C1260 510 1261 514 1260 520 L1258 552 C1257 558 1254 562 1248 562 L1215 558 L1182 549 Z" fill="#4a4ae2" stroke="#15158a" stroke-width="1.25" stroke-linejoin="round" />
<path d="M1184 502 L1204 494 L1256 507 C1240 506 1226 508 1218 512 Z" fill="#8888f7" stroke="#15158a" stroke-width="0.8" stroke-linejoin="round" />
<path d="M1218 512 C1228 506 1246 505 1256 507 C1260 510 1261 514 1260 520 L1258 552 C1257 558 1254 562 1248 562 L1215 558 C1215 545 1216 525 1218 512 Z" fill="#9d9df6" stroke="#15158a" stroke-width="0.9" stroke-linejoin="round" />
<path d="M1182 538 L1215 548 L1215 558 L1182 549 Z" fill="#3f3fd0" stroke="#15158a" stroke-width="0.8" stroke-linejoin="round" />
<path d="M1183 512 L1216 522" fill="none" stroke="#15158a" stroke-width="0.8" stroke-linecap="round" stroke-linejoin="round" />
<path d="M1229 594 L1262 597 L1280 589 L1281 606 L1262 616 L1226 612 Z" fill="#e98a2c" stroke="#1f0e00" stroke-width="0.9" stroke-linejoin="round" />
<path d="M1240 598 L1240 612 M1250 599 L1250 614 M1262 597 L1262 616" fill="none" stroke="#1f0e00" stroke-width="0.8" stroke-linecap="round" stroke-linejoin="round" />
<path d="M1188 226 L1222 222 L1232 230 L1246 240 L1246 262 L1230 252 L1190 250 Z" fill="#e98a2c" stroke="#1f0e00" stroke-width="1.25" stroke-linejoin="round" />
<path d="M1231 230 L1230 252" fill="none" stroke="#1f0e00" stroke-width="0.9" stroke-linecap="round" stroke-linejoin="round" />
<circle cx="1255.5" cy="254" r="15" fill="#e98a2c" stroke="#1f0e00" stroke-width="1.25" />
<circle cx="1255.5" cy="254" r="4" fill="#fff" stroke="#1f0e00" stroke-width="0.9" />
<path d="M1221 222 L1240 222 L1240 232 L1226 230 Z" fill="#e98a2c" stroke="#1f0e00" stroke-width="0.8" stroke-linejoin="round" />
<path d="M1104 226 L1160 232 L1150 262 C1140 262 1132 256 1126 248 C1118 240 1110 234 1100 230 Z" fill="#d97e1d" stroke="#1f0e00" stroke-width="0.9" stroke-linejoin="round" />
<path d="M826 149 L1066 177 L1072 171 L1086 171 L1091 179 L1086 187 L1040 187 L834 168.5 Z" fill="#e98a2c" stroke="#1f0e00" stroke-width="1.25" stroke-linejoin="round" />
<path d="M830 158.500 L1062 182" fill="none" stroke="#1f0e00" stroke-width="1" stroke-linecap="round" stroke-linejoin="round" />
<circle cx="1079.5" cy="180" r="8.5" fill="#e98a2c" stroke="#1f0e00" stroke-width="1.25" />
<circle cx="1079.5" cy="181.5" r="3.5" fill="#fff" stroke="#1f0e00" stroke-width="0.9" />
<path d="M868 199 C900 194 960 190 1022 185 C1085 182 1148 185 1185 190 C1205 194 1214 208 1222 223 L1196 230 L1160 234 L1108 226 C1080 224 1000 224 960 228 C940 230 926 232 916 232 L880 224 Z" fill="url(#armG)" stroke="#1f0e00" stroke-width="1.25" stroke-linejoin="round" />
<path d="M868 199 C900 194 960 190 1022 185 C1085 182 1148 185 1185 190 C1205 194 1214 208 1222 223 L1212 224 C1206 212 1196 199 1182 196 C1060 190 960 194 900 199 Z" fill="#f79f24" stroke="#1f0e00" stroke-width="1" stroke-linejoin="round" />
<path d="M1182 196 L1181 226" fill="none" stroke="#1f0e00" stroke-width="0.9" stroke-linecap="round" stroke-linejoin="round" />
<path d="M920 230 C960 225 1040 222 1104 224" fill="none" stroke="#6b3a05" stroke-width="2" stroke-linecap="round" stroke-linejoin="round" />
<rect x="924" y="204" width="34" height="16" rx="8.0" fill="#d97e1d" stroke="#2b1804" stroke-width="1"/>
<rect x="925.5" y="205.8" width="31" height="12.4" rx="6.2" fill="#e58a25" stroke="#2b1804" stroke-width=".9"/>
<rect x="925.5" y="205.8" width="19" height="12.4" rx="6.2" fill="#fff" stroke="#2b1804" stroke-width=".9"/>
<rect x="992" y="200.5" width="35.5" height="16.5" rx="8.25" fill="#d97e1d" stroke="#2b1804" stroke-width="1"/>
<rect x="993.5" y="202.3" width="32.5" height="12.9" rx="6.45" fill="#e58a25" stroke="#2b1804" stroke-width=".9"/>
<rect x="993.5" y="202.3" width="16" height="12.9" rx="6.45" fill="#fff" stroke="#2b1804" stroke-width=".9"/>
<rect x="1121.5" y="203" width="48.5" height="14.5" rx="7.25" fill="#d97e1d" stroke="#2b1804" stroke-width="1"/>
<rect x="1123.0" y="204.8" width="45.5" height="10.9" rx="5.45" fill="#e58a25" stroke="#2b1804" stroke-width=".9"/>
<rect x="1123.0" y="204.8" width="25.5" height="10.9" rx="5.45" fill="#fff" stroke="#2b1804" stroke-width=".9"/>
<path d="M1153 240 C1156 228 1168 224 1180 224 C1190 226 1195 236 1193 250 L1186 300 L1143.500 300 Z" fill="#e98a2c" stroke="#1f0e00" stroke-width="1.25" stroke-linejoin="round" />
<path d="M1145.200 300 L1184.600 300" fill="none" stroke="#e98a2c" stroke-width="2.400"/>
<path d="M1158 240 L1147.500 300" fill="none" stroke="#1f0e00" stroke-width="0.9" stroke-linecap="round" stroke-linejoin="round" />
<circle cx="1177.5" cy="243.5" r="15" fill="#e98a2c" stroke="#1f0e00" stroke-width="1.25" />
<circle cx="1179.3" cy="243" r="15.5" fill="#e98a2c" stroke="#1f0e00" stroke-width="1.25" />
<circle cx="1179.3" cy="243" r="10.4" fill="#fff" stroke="#1f0e00" stroke-width="1.25" />
<circle cx="908" cy="214" r="13.5" fill="#e98a2c" stroke="#1f0e00" stroke-width="1.25" />
<circle cx="908" cy="214" r="11" fill="#f5a23e" stroke="#1f0e00" stroke-width="0.8" />
<circle cx="908" cy="214" r="7.5" fill="#fff" stroke="#1f0e00" stroke-width="1.25" />
<path d="M868 199 L896 207 L897 222 L908 228 L916 232 L878 259 L822 259 L796 255 L798 248 L808 236 L840 250 L856 226 L856 206 Z" fill="#e98a2c" stroke="#1f0e00" stroke-width="1.25" stroke-linejoin="round" />
<path d="M860 232 L896 207 L897 222 L866 248 L856 250 Z" fill="#f5a23e" stroke="#1f0e00" stroke-width="0.8" stroke-linejoin="round" />
<ellipse cx="872" cy="212" rx="8" ry="11" fill="#d97e1d" stroke="#1f0e00" stroke-width="1.25" />
<ellipse cx="880" cy="210" rx="7" ry="10" fill="#e98a2c" stroke="#1f0e00" stroke-width="1.25" />
<path d="M792 150 C792 142 798 139 804 140 L806 166 C798 166 792 158 792 150 Z" fill="#e98a2c" stroke="#1f0e00" stroke-width="1" stroke-linejoin="round" />
<path d="M792 152 C794 140 808 136 820 140 C826 142 828 146 829 150 L844 195 L806 196 L800 168 C794 164 791 158 792 152 Z" fill="#f09a38" stroke="#1f0e00" stroke-width="1.25" stroke-linejoin="round" />
<path d="M800 150 C802 144 810 142 816 146 L826 196" fill="none" stroke="#1f0e00" stroke-width="0.8" stroke-linecap="round" stroke-linejoin="round" />
<path d="M834 178 L840 196" fill="none" stroke="#1f0e00" stroke-width="0.8" stroke-linecap="round" stroke-linejoin="round" />
<path d="M806 195 L854 195 L854 250 L820 252 L806 252 Z" fill="#9d9df6" stroke="#15158a" stroke-width="1.25" stroke-linejoin="round" />
<path d="M806 195 L817 195 L817 250 L806 252 Z" fill="#4a4ae2" stroke="#15158a" stroke-width="0.8" stroke-linejoin="round" />
<path d="M817 197 L824 197 L824 248 L817 248 Z" fill="#9d9df6" stroke="#15158a" stroke-width="0.8" stroke-linejoin="round" />
<path d="M849 216 L854 216 L854 250 L849 250 Z" fill="#4a4ae2" stroke="#15158a" stroke-width="0.6" stroke-linejoin="round" />
<path d="M826 195 L853 195 L853 213 L832 213 L832 218 L826 218 Z" fill="#2a2a2a" stroke="#111" stroke-width="0.8" stroke-linejoin="round" />
<path d="M796 254 L822 259 L863 260 L863 268 L859 268 L859 275 L856 275 L856 283 L806 283 L806 275 L801 275 L801 268 L796 267 Z" fill="url(#ringG)" stroke="#1f0e00" stroke-width="1.25" stroke-linejoin="round" />
<path d="M796 261 L819 262 L819 259 M801 268 L859 268 M806 275 L856 275 M828 268 L828 275" fill="none" stroke="#1f0e00" stroke-width="0.9" stroke-linecap="round" stroke-linejoin="round" />
<path d="M805 283 L856 283 L856 295 L805 295 Z" fill="url(#silG)" stroke="#333" stroke-width="0.9" stroke-linejoin="round" />
<path d="M805 287 L856 287" fill="none" stroke="#2a2a2a" stroke-width="1.2" stroke-linecap="round" stroke-linejoin="round" />
<path d="M805 291.500 L856 291.500" fill="none" stroke="#555" stroke-width="0.8" stroke-linecap="round" stroke-linejoin="round" />
<path d="M804 295 L858 295 L876 298 L883 312 L853 319 L778 317 L786 302 Z" fill="#262626" stroke="#0c0c0c" stroke-width="1.25" stroke-linejoin="round" />
<path d="M786 302 L847 302 L853 319 L778 317 Z" fill="#2f2f2f" stroke="#0c0c0c" stroke-width="0.8" stroke-linejoin="round" />
<path d="M847 302 L876 298 L883 312 L853 319 Z" fill="#1c1c1c" stroke="#0c0c0c" stroke-width="0.8" stroke-linejoin="round" />
<path d="M758 324 C730 322 716 350 722 380 C724 394 730 402 733 404" fill="none" stroke="#20208c" stroke-width="2.4" stroke-linecap="round" stroke-linejoin="round" />
<path d="M760 328 C738 330 724 346 726 364 C727 374 730 380 733 384" fill="none" stroke="#2c2ca0" stroke-width="1.8" stroke-linecap="round" stroke-linejoin="round" />
<path d="M762 319 L858 320 L894 311 L901 325 L901 334 L932 342 L907 350 L865 346 L757 345 L726 340 L757 334 Z" fill="#c4c4c4" stroke="#333" stroke-width="1.25" stroke-linejoin="round" />
<path d="M762 319 L858 320 L865 334 L865 346 L757 345 L757 332 Z" fill="#bcbcbc" stroke="#333" stroke-width="0.9" stroke-linejoin="round" />
<path d="M858 320 L894 311 L901 325 L865 334 Z" fill="#d6d6d6" stroke="#333" stroke-width="0.9" stroke-linejoin="round" />
<path d="M865 334 L901 325 L901 334 L865 346 Z" fill="#a9a9a9" stroke="#333" stroke-width="0.9" stroke-linejoin="round" />
<path d="M726 340 L757 334 L757 345 L728 346 Z" fill="#dadada" stroke="#333" stroke-width="0.8" stroke-linejoin="round" />
<path d="M865 346 L898 336 L926 337 L932 342 L907 350 Z" fill="#d4d4d4" stroke="#333" stroke-width="0.8" stroke-linejoin="round" />
<path d="M727 346.500 L865 348 L907 351" fill="none" stroke="#333" stroke-width="0.8" stroke-linecap="round" stroke-linejoin="round" />
<path d="M738 348 L776 349 L777 434 L735 449 L732 360 Z" fill="url(#plG)" stroke="#333" stroke-width="1.25" stroke-linejoin="round" />
<path d="M740 350 L758 350 L756 356 L746 360 L740 358 Z" fill="#3a3a3a" stroke="#222" stroke-width="0.7" stroke-linejoin="round" />
<path d="M765 350 L776 350 L774 354 L767 356 Z" fill="#3a3a3a" stroke="#222" stroke-width="0.7" stroke-linejoin="round" />
<path d="M897 350 L927 346 L928 438 L893 455 L892 362 Z" fill="url(#plG)" stroke="#333" stroke-width="1.25" stroke-linejoin="round" />
<path d="M886 350 L897 350 L894 362 L886 358 Z" fill="#3a3a3a" stroke="#222" stroke-width="0.7" stroke-linejoin="round" />
<path d="M910 366 L921 366 L921 372 L910 372 Z" fill="#1c1c1c" stroke="#000" stroke-width="0.6" stroke-linejoin="round" />
<path d="M912 372 L920 372 L920 377 L912 377 Z" fill="#9a9a9a" stroke="#333" stroke-width="0.6" stroke-linejoin="round" />
<path d="M913 377 L922 377 L923 416 L915 416 Z" fill="#e0262a" stroke="#5c0a0a" stroke-width="0.9" stroke-linejoin="round" />
<path d="M916.500 379 L917.500 414" fill="none" stroke="#f47a7a" stroke-width="1.5" stroke-linecap="round" stroke-linejoin="round" />
<path d="M918.500 416 L921 452" fill="none" stroke="#8a8a8a" stroke-width="1.6" stroke-linecap="round" stroke-linejoin="round" />
<path d="M919.500 416 L922 452" fill="none" stroke="#333" stroke-width="0.6" stroke-linecap="round" stroke-linejoin="round" />
<path d="M881 332 C900 326 920 324 930 332 C944 344 946 380 938 400 C934 408 930 410 926 411" fill="none" stroke="#20208c" stroke-width="2.4" stroke-linecap="round" stroke-linejoin="round" />
<path d="M896 328 C916 322 934 330 938 350 C940 364 934 378 924 381" fill="none" stroke="#2c2ca0" stroke-width="1.8" stroke-linecap="round" stroke-linejoin="round" />
<path d="M740.0 447 L731.0 459 L739.0 466" fill="none" stroke="#161616" stroke-width="2.2" stroke-linecap="round" stroke-linejoin="round" />
<path d="M743.0 446 L734.0 458" fill="none" stroke="#6a6a6a" stroke-width="1" stroke-linecap="round" stroke-linejoin="round" />
<path d="M748.5 444 L739.5 456 L747.5 463" fill="none" stroke="#161616" stroke-width="2.2" stroke-linecap="round" stroke-linejoin="round" />
<path d="M751.5 443 L742.5 455" fill="none" stroke="#6a6a6a" stroke-width="1" stroke-linecap="round" stroke-linejoin="round" />
<path d="M757.0 441 L748.0 453 L756.0 460" fill="none" stroke="#161616" stroke-width="2.2" stroke-linecap="round" stroke-linejoin="round" />
<path d="M760.0 440 L751.0 452" fill="none" stroke="#6a6a6a" stroke-width="1" stroke-linecap="round" stroke-linejoin="round" />
<path d="M765.5 438 L756.5 450 L764.5 457" fill="none" stroke="#161616" stroke-width="2.2" stroke-linecap="round" stroke-linejoin="round" />
<path d="M768.5 437 L759.5 449" fill="none" stroke="#6a6a6a" stroke-width="1" stroke-linecap="round" stroke-linejoin="round" />
<path d="M774.0 435 L765.0 447 L773.0 454" fill="none" stroke="#161616" stroke-width="2.2" stroke-linecap="round" stroke-linejoin="round" />
<path d="M777.0 434 L768.0 446" fill="none" stroke="#6a6a6a" stroke-width="1" stroke-linecap="round" stroke-linejoin="round" />
<path d="M896 458 L930 442 L936 452 L904 470 Z" fill="#b9b9b9" stroke="#222" stroke-width="0.9" stroke-linejoin="round" />
<path d="M912 452 L924 448 L920 460 L914 462 Z" fill="#1a1a1a" stroke="#000" stroke-width="0.6" stroke-linejoin="round" />
<path d="M892 482 L936 460" fill="none" stroke="#1a1a1a" stroke-width="1.5" stroke-linecap="round" stroke-linejoin="round" />
<path d="M904 470 L900 476 M912 466 L908 472 M920 462 L916 468 M928 458 L924 464" fill="none" stroke="#1a1a1a" stroke-width="1.4" stroke-linecap="round" stroke-linejoin="round" /></svg>
<div class="abs" style="left:1886px;top:117px;width:34px;height:928px;background:#f5f5f5"></div>
<div class="abs" style="left:1888px;top:215px;width:32px;height:1px;background:#b5b5b5"></div>
<div class="abs" style="left:1892px;top:121px;width:1px;height:1px;background:#9a9a9a"></div>
<div class="abs" style="left:1895px;top:121px;width:1px;height:1px;background:#9a9a9a"></div>
<div class="abs" style="left:1898px;top:121px;width:1px;height:1px;background:#9a9a9a"></div>
<div class="abs" style="left:1901px;top:121px;width:1px;height:1px;background:#9a9a9a"></div>
<div class="abs" style="left:1904px;top:121px;width:1px;height:1px;background:#9a9a9a"></div>
<div class="abs" style="left:1907px;top:121px;width:1px;height:1px;background:#9a9a9a"></div>
<div class="abs" style="left:1910px;top:121px;width:1px;height:1px;background:#9a9a9a"></div>
<div class="abs" style="left:1913px;top:121px;width:1px;height:1px;background:#9a9a9a"></div>
<div class="abs" style="left:1916px;top:121px;width:1px;height:1px;background:#9a9a9a"></div>
<svg style="left:1896px;top:134px" width="19" height="17" viewBox="0 0 19 17"><path d="M1.500 4.500 H5 L6.500 2 H12.500 L14 4.500 H17.500 V15.500 H1.500 Z" fill="#e8e8e8" stroke="#2b2b2b" stroke-width="1.300" stroke-linejoin="round"/><circle cx="9.500" cy="10" r="4" fill="#5a5a5a" stroke="#1d1d1d"/><circle cx="9.500" cy="10" r="1.800" fill="#c9c9c9"/></svg>
<svg style="left:1896px;top:159px" width="19" height="19" viewBox="0 0 19 19"><path d="M1 3 H6 V5 H14 V8 L18 6 V15 L14 13 V16 H1 Z" fill="#3f8fc6" stroke="#123a5a" stroke-width="1.200" stroke-linejoin="round"/><circle cx="7.500" cy="10.500" r="2.800" fill="#bfe0f3" stroke="#123a5a"/><circle cx="12.500" cy="15" r="3.400" fill="#e2401c"/></svg>
<svg style="left:1896px;top:185px" width="19" height="19" viewBox="0 0 19 19"><path d="M1 3 H6 V5 H14 V8 L18 6 V15 L14 13 V16 H1 Z" fill="#ececec" stroke="#cdcdcd" stroke-width="1.200" stroke-linejoin="round"/><circle cx="7.500" cy="10.500" r="2.800" fill="#f6f6f6" stroke="#cdcdcd"/><rect x="10" y="12" width="6" height="6" fill="#cfcfcf"/></svg>
<div class="abs" style="left:1861px;top:193px;width:26px;height:25px;background:#fdfdfd;border:1px solid #a9a9a9;border-right:none"></div>
<div class="rtab" style="top:217px"></div>
<div class="rtab" style="top:241px"></div>
<div class="rtab" style="top:265px"></div>
<div class="rtab" style="top:289px"></div>
<div class="rtab" style="top:313px"></div>
<div class="rtab" style="top:337px"></div>
<div class="rtab" style="top:361px"></div>
<svg style="left:1864px;top:195px" width="20" height="20" viewBox="0 0 20 20"><defs><radialGradient id="rg1" cx=".4" cy=".3" r=".8"><stop offset="0" stop-color="#6fc3f0"/><stop offset=".5" stop-color="#1a6fb0"/><stop offset="1" stop-color="#06243f"/></radialGradient></defs><circle cx="10" cy="10" r="9.300" fill="url(#rg1)"/><path d="M8 6 L13.500 10 L8 14 Z" fill="none" stroke="#e8f6ff" stroke-width="1.100"/><circle cx="10" cy="3.300" r="1" fill="#dff"/><circle cx="10" cy="16.700" r="1" fill="#dff"/><circle cx="3.300" cy="10" r="1" fill="#dff"/><circle cx="16.700" cy="10" r="1" fill="#dff"/></svg>
<svg style="left:1864px;top:219px" width="20" height="20" viewBox="0 0 20 20"><path d="M1.500 10.500 L10 2 L18.500 10.500" fill="none" stroke="#1b4f78" stroke-width="2.200" stroke-linejoin="round"/><path d="M4 9.500 V18.500 H16 V9.500 L10 3.800 Z" fill="#f7f7f7" stroke="#1b4f78" stroke-width="1.200"/><rect x="8.500" y="12" width="3.500" height="6.500" fill="#fff" stroke="#333"/></svg>
<svg style="left:1864px;top:243px" width="20" height="20" viewBox="0 0 20 20"><g fill="#f4f4f4" stroke="#2e2e2e" stroke-width="1.100" stroke-linejoin="round"><path d="M3 5 L6.500 3 L9 4.500 V17 L6 19 L3 17 Z"/><path d="M8 4 L11.500 2 L14 3.500 V16 L11 18 L8 16 Z"/><path d="M13 3.500 L16 2 L18 3.500 V15.500 L15.500 17.500 L13 16 Z"/></g></svg>
<svg style="left:1864px;top:267px" width="20" height="20" viewBox="0 0 20 20"><path d="M1.500 17.500 V3.500 H7.500 L9 5.500 H16.500 V8" fill="#f4f4f4" stroke="#2e2e2e" stroke-width="1.200" stroke-linejoin="round"/><path d="M1.500 17.500 L5.500 8 H19 L15.500 17.500 Z" fill="#fafafa" stroke="#2e2e2e" stroke-width="1.200" stroke-linejoin="round"/></svg>
<svg style="left:1864px;top:291px" width="20" height="20" viewBox="0 0 20 20"><rect x="1.500" y="2" width="17" height="16" rx="1" fill="#fdfdfd" stroke="#333" stroke-width="1.200"/><g fill="#f0c526" stroke="#5a4300" stroke-width=".9"><rect x="4" y="4.500" width="7" height="3"/><rect x="13" y="4.500" width="3.500" height="3"/><path d="M6.500 9.500 H10 V12.500 H13 V15.500 H4 V12.500 H6.500 Z"/></g><rect x="14.500" y="10" width="2.500" height="6" fill="#ddd" stroke="#555" stroke-width=".8"/></svg>
<svg style="left:1864px;top:315px" width="20" height="20" viewBox="0 0 20 20"><defs><clipPath id="bb2"><circle cx="10" cy="10" r="8.800"/></clipPath></defs><g clip-path="url(#bb2)"><path d="M10 10 L0 0 H20 Z" fill="#e23b28"/><path d="M10 10 L20 0 V20 Z" fill="#f3c923"/><path d="M10 10 L20 20 H0 Z" fill="#47a53d"/><path d="M10 10 L0 20 V0 Z" fill="#3e79c9"/><ellipse cx="7" cy="6" rx="4.500" ry="3" fill="#fff" fill-opacity=".35"/></g></svg>
<svg style="left:1864px;top:339px" width="20" height="20" viewBox="0 0 20 20"><rect x="1.500" y="1.500" width="17" height="17" rx="1" fill="#fdfdfd" stroke="#17476b" stroke-width="1.300"/><rect x="2" y="2" width="16" height="3" fill="#7db9dd"/><g fill="#2c7cb0"><rect x="4" y="7.500" width="3" height="2.200"/><rect x="4" y="11" width="3" height="2.200"/><rect x="4" y="14.500" width="3" height="2.200"/></g><path d="M9 8.600 H16 M9 12.100 H16 M9 15.600 H16" stroke="#17476b" stroke-width="1.200"/></svg>
<svg style="left:1864px;top:363px" width="20" height="20" viewBox="0 0 20 20"><rect x="1.500" y="1.500" width="13" height="11" fill="#fdfdfd" stroke="#333" stroke-width="1.100"/><path d="M3.500 4 H12.500 M3.500 6.500 H12.500 M3.500 9 H9" stroke="#17476b" stroke-width="1.200"/><path d="M4 15 H8 M6 12.500 V15" stroke="#333"/><path d="M8 11 L13 8.500 L18.500 10.500 V16 L13.500 19 L8 17 Z" fill="#f0c526" stroke="#5a4300" stroke-width=".9" stroke-linejoin="round"/><path d="M11 7.500 L14 6 L17 7.500 V10.500 L14 12 L11 10.500 Z" fill="#7fc4e8" stroke="#1f5274" stroke-width=".9"/></svg>
<svg style="left:1756px;top:125px" width="14" height="14" viewBox="0 0 14 14"><rect x=".7" y=".7" width="12.600" height="12.600" fill="none" stroke="#a9a9a9" stroke-width="1.100"/><path d="M2.500 .7 V13.300" stroke="#a9a9a9"/><path d="M8.500 4 L5 7 L8.500 10 Z" fill="#a9a9a9"/></svg>
<svg style="left:1783px;top:125px" width="14" height="14" viewBox="0 0 14 14"><rect x=".7" y=".7" width="12.600" height="12.600" fill="none" stroke="#a9a9a9" stroke-width="1.100"/><path d="M11.500 .7 V13.300" stroke="#a9a9a9"/><path d="M5.500 4 L9 7 L5.500 10 Z" fill="#a9a9a9"/></svg>
<div class="abs" style="left:1810px;top:136px;width:10px;height:2px;background:#a9a9a9"></div>
<svg style="left:1834px;top:125px" width="16" height="14" viewBox="0 0 16 14"><path d="M5.500 4.500 V.7 H15.300 V8.500 H11" fill="none" stroke="#a9a9a9" stroke-width="1.200"/><rect x=".7" y="4.700" width="10" height="8.200" fill="none" stroke="#a9a9a9" stroke-width="1.200"/></svg>
<svg style="left:1862px;top:126px" width="12" height="12" viewBox="0 0 12 12"><path d="M1 1 L11 11 M11 1 L1 11" stroke="#a9a9a9" stroke-width="1.300"/></svg>
<svg style="left:1783px;top:152px" width="30" height="24" viewBox="0 0 30 24"><path d="M2.500 12 L11 20.500 L27 3.500" fill="none" stroke="#cfe9ca" stroke-width="5.500"/></svg>
<svg style="left:1829px;top:181px" width="25" height="25" viewBox="0 0 25 25"><path d="M4 4 L21 21 M21 4 L4 21" fill="none" stroke="#f5cdc8" stroke-width="6" stroke-linecap="round"/></svg>
<div class="abs" style="left:248px;top:149px;width:0;height:0;border-top:4.500px solid transparent;border-bottom:4.500px solid transparent;border-left:5.500px solid #1e1e1e"></div>
<svg style="left:265px;top:144px" width="20" height="20" viewBox="0 0 20 20"><path d="M1.500 9 L6 5.500 L9 6.500 V4 L13 2 L18.500 4 V14.500 L10.500 19 L1.500 15 Z" fill="#f2c42c" stroke="#5a4500" stroke-width="1.100" stroke-linejoin="round"/><path d="M9 6.500 L9.500 12 L1.500 9 M9.500 12 L10.500 19 M9.500 12 L18.500 9" fill="none" stroke="#5a4500" stroke-width="1"/><path d="M9 4.200 L13 2.200 L18.300 4.200 V9.500 L13.500 12 L9 10 Z" fill="#7fc4e8" stroke="#1f5274" stroke-width="1.100" stroke-linejoin="round"/><path d="M9 4.200 L13.500 6.200 L18.300 4.200 M13.500 6.200 V12" fill="none" stroke="#1f5274" stroke-width="1"/></svg>
<span class="t" style="font-size:11.2px;color:#1a1a1a;letter-spacing:0.248px;top:146.5px;line-height:16px;height:16px;left:288px;">Pick and place robot (Sm...</span>
<span class="t" style="font-size:12.5px;font-weight:bold;color:#111;letter-spacing:0.739px;top:1028.5px;line-height:16px;height:16px;left:254px;">Camera1</span>
<svg style="left:885.0px;top:120.0px" width="24" height="22" viewBox="0 0 24 22"><circle cx="13.500" cy="8.500" r="6.500" fill="#f3f3f3" stroke="#cfcfcf" stroke-width="1.300"/><path d="M9 13.500 L3 20" stroke="#cfcfcf" stroke-width="3" stroke-linecap="round"/><path d="M13.500 5 V12 M10 8.500 H17" stroke="#dcdcdc"/></svg>
<svg style="left:910.0px;top:120.0px" width="24" height="22" viewBox="0 0 24 22"><rect x="9" y="2" width="13" height="12" fill="none" stroke="#c9c9c9" stroke-dasharray="2 1.500"/><circle cx="12.500" cy="9.500" r="6" fill="#f1f1f1" stroke="#cfcfcf" stroke-width="1.300"/><path d="M8 14 L3 20" stroke="#cfcfcf" stroke-width="3" stroke-linecap="round"/></svg>
<svg style="left:936.0px;top:120.0px" width="24" height="22" viewBox="0 0 24 22"><path d="M3 13.500 L15 4 L19.500 3 L21.500 6 L19 9 L8.500 19.500 C5 21 1.500 17 3 13.500 Z" fill="#c9cdd2" stroke="#4d545c" stroke-width="1"/><ellipse cx="6" cy="16.500" rx="3.800" ry="2.600" transform="rotate(-42 6 16.500)" fill="#eef1f4" stroke="#4d545c" stroke-width=".9"/><path d="M22 15.500 H14.500 M17.500 12 L13.500 15.500 L17.500 19" fill="none" stroke="#2c7fb8" stroke-width="2.300"/></svg>
<svg style="left:963.0px;top:120.0px" width="24" height="22" viewBox="0 0 24 22"><path d="M3 9 C6 4 14 3 21 6 V15 C17 13 14 14 13 18 L3 19 Z" fill="#e7e7e7" stroke="#d2d2d2"/><path d="M3 9 L8 8 V18.500 M13 8 V18" stroke="#d9d9d9" fill="none"/></svg>
<svg style="left:988.0px;top:120.0px" width="24" height="22" viewBox="0 0 24 22"><path d="M9 1 L15 1.500 L11 6 L16 6.500 L6 13 L9 7.500 L4.500 7 Z" fill="#f3b62d" stroke="#c98a12" stroke-width=".7"/><path d="M4 15 L14 6 L18 5 L20 8 L18 10.500 L9 20 C6 21.500 2.500 18 4 15 Z" fill="#c9cdd2" stroke="#4d545c" stroke-width="1"/><ellipse cx="6.500" cy="17.500" rx="3.500" ry="2.400" transform="rotate(-42 6.500 17.500)" fill="#eef1f4" stroke="#4d545c" stroke-width=".9"/></svg>
<span class="t" style="font-size:14px;color:#3c86b8;font-family:'Liberation Serif',serif;top:128.5px;line-height:16px;height:16px;left:1005.5px;transform:translateX(-50%);">A</span>
<svg style="left:1014.0px;top:120.0px" width="24" height="22" viewBox="0 0 24 22"><defs><linearGradient id="cb1" x1="0" y1="0" x2="1" y2="1"><stop offset="0" stop-color="#a9d8f2"/><stop offset="1" stop-color="#3d96cf"/></linearGradient></defs><path d="M2 7 L7 2 H21 V15 L16 20" fill="#fff" stroke="#333" stroke-width="1"/><path d="M16 7 L21 2 M16 7 V20" stroke="#333" fill="none"/><rect x="2" y="7" width="14" height="13.500" fill="url(#cb1)" stroke="#1b4f78" stroke-width="1.100"/><path d="M12 3 V6 M11 5 L12 6.200 L13 5 M18 11 H20.500 M18 15.500 H20.500" stroke="#333" stroke-width=".9" fill="none"/></svg>
<div class="dd" style="left:1042.5px;top:129px"></div>
<svg style="left:1055.0px;top:120.0px" width="24" height="22" viewBox="0 0 24 22"><defs><linearGradient id="cb2" x1="0" y1="0" x2="1" y2="0"><stop offset="0" stop-color="#8dc9ec"/><stop offset="1" stop-color="#2e7fb6"/></linearGradient></defs><path d="M3 4.500 L12 1.500 L20.500 4 V17 L11 20.500 L3 17.500 Z" fill="#eef3f6" stroke="#1b4f78" stroke-width="1.100" stroke-linejoin="round"/><path d="M3 4.500 L11 7 V20.500 L3 17.500 Z" fill="url(#cb2)" stroke="#1b4f78" stroke-width="1"/><path d="M3 4.500 L12 1.500 L20.500 4 L11 7 Z" fill="#c5e4f5" stroke="#1b4f78" stroke-width="1"/></svg>
<div class="dd" style="left:1083.5px;top:129px"></div>
<svg style="left:1095.0px;top:120.0px" width="24" height="22" viewBox="0 0 24 22"><path d="M2 11 C7 3.500 17 3.500 22 11 C17 18.500 7 18.500 2 11 Z" fill="#f7f7f7" stroke="#8a8a8a" stroke-width="1.200"/><circle cx="12" cy="10.500" r="4.600" fill="#3a3a3a"/><path d="M12 4 V20" stroke="#1c1c1c" stroke-width="1.200"/></svg>
<div class="dd" style="left:1123.5px;top:129px"></div>
<svg style="left:1135.0px;top:120.0px" width="24" height="22" viewBox="0 0 24 22"><circle cx="10.500" cy="9.500" r="8" fill="#ebebeb" stroke="#dadada"/><path d="M11 19 L18 10 L21 12.500 L14 21 Z" fill="#e2e2e2" stroke="#d0d0d0"/></svg>
<svg style="left:1160.0px;top:120.0px" width="24" height="22" viewBox="0 0 24 22"><path d="M2 13 H22 V21 H2 Z" fill="#e4e4e4" stroke="#d6d6d6"/><circle cx="12" cy="9.500" r="7.500" fill="#ececec" stroke="#dcdcdc"/><path d="M4 17 H8 V20 H4 Z M16 17 H20 V20 H16 Z" fill="#f6f6f6"/></svg>
<div class="dd" style="left:1188.5px;top:129px"></div>
<svg style="left:1201.0px;top:120.0px" width="24" height="22" viewBox="0 0 24 22"><defs><linearGradient id="mn" x1="0" y1="0" x2="1" y2="1"><stop offset="0" stop-color="#f4f4f4"/><stop offset="1" stop-color="#bdbdbd"/></linearGradient></defs><rect x="2" y="3" width="20" height="13" fill="url(#mn)" stroke="#3a3a3a" stroke-width="1.400"/><path d="M12 16 V19.500 M7.500 20 H16.500" stroke="#3a3a3a" stroke-width="1.600"/></svg>
<div class="dd" style="left:1229.5px;top:129px"></div>

</body>
</html>
